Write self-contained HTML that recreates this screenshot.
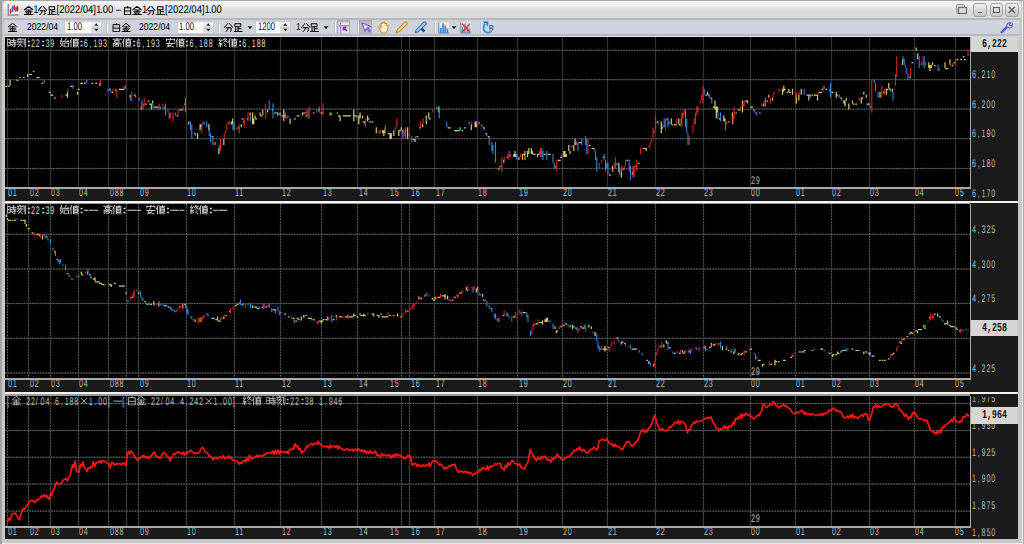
<!DOCTYPE html><html><head><meta charset="utf-8"><style>
*{margin:0;padding:0;box-sizing:border-box}
html,body{width:1024px;height:544px;overflow:hidden;background:#c9c9c9;text-rendering:geometricPrecision}
.a{position:absolute}
.k{display:inline-block;overflow:visible;stroke-width:1.15px}
.s .k{stroke-width:1.3px}
.fw{display:inline-block;width:13.2px;text-align:center}
.n{position:absolute;font:11px/12px "Liberation Sans",sans-serif;white-space:pre;color:#b8b8b8;transform:scaleX(.65);transform-origin:0 0}
.t{position:absolute;font:11px/12px "Liberation Mono",monospace;white-space:pre;transform:scaleX(.7273);transform-origin:0 0;color:#b4b4b4}
.s{position:absolute;font:11px/11px "Liberation Sans",sans-serif;white-space:pre;color:#1a1a1a}
svg.f{position:absolute;left:0;top:0}
</style></head><body>
<svg width="0" height="0" style="position:absolute"><defs><symbol id="kin" viewBox="0 0 12 12" preserveAspectRatio="none"><path d="M6 .5L.5 5M6 .5L11.5 5M3 5.2H9M2 7.8H10M6 5.2V11.2M.5 11.3H11.5M3.3 8.8L4.3 10.6M8.7 8.8L7.7 10.6" fill="none" stroke="currentColor" stroke-linecap="square"/></symbol><symbol id="fun" viewBox="0 0 12 12" preserveAspectRatio="none"><path d="M4.8 .8L.5 6M7.2 .8L11.5 6M2.8 6.3H9.3V10.5L8 11.5M5.8 6.3Q5.5 10 2.5 11.6" fill="none" stroke="currentColor" stroke-linecap="square"/></symbol><symbol id="soku" viewBox="0 0 12 12" preserveAspectRatio="none"><path d="M2.5 1H9.5V5H2.5ZM6 5V10.8M6 7.6H10M3 6.5V10.5M.8 11.5Q5 10.5 11.5 11.5" fill="none" stroke="currentColor" stroke-linecap="square"/></symbol><symbol id="haku" viewBox="0 0 12 12" preserveAspectRatio="none"><path d="M6.5 0L5.5 2M2 2.2H10V11.5H2ZM2 6.8H10" fill="none" stroke="currentColor" stroke-linecap="square"/></symbol><symbol id="ji" viewBox="0 0 12 12" preserveAspectRatio="none"><path d="M.8 2H4V10H.8ZM.8 6H4M5.2 3H11.3M8.3 .5V5.2M5 5.5H11.8M5 8H11.8M9.8 5.5V11.6H8.6M6.2 9L7.2 10.3" fill="none" stroke="currentColor" stroke-linecap="square"/></symbol><symbol id="koku" viewBox="0 0 12 12" preserveAspectRatio="none"><path d="M4.5 0V1.3M.5 1.5H8.5M2.5 1.5L.8 5H6.5M5.5 3L1 8.5M7 5L1.8 11.5M4 8.5L7.5 11.5M9.3 1.5V8.8M11.2 .3V11.6H10" fill="none" stroke="currentColor" stroke-linecap="square"/></symbol><symbol id="shi" viewBox="0 0 12 12" preserveAspectRatio="none"><path d="M2.3 .5L1 7.5M.3 4H4.8Q4 9 .5 11.5M1.5 7L4.5 10M8.2 .5L6 4.5H11.3M10.2 2.8L11.3 4.5M6.3 6.5H11V11.3H6.3Z" fill="none" stroke="currentColor" stroke-linecap="square"/></symbol><symbol id="chi" viewBox="0 0 12 12" preserveAspectRatio="none"><path d="M3 .3L.5 5.5M2 3.5V11.7M5 2.2H11.8M8.3 0V2.2M6.3 3.5H10.5V9.5H6.3ZM6.3 5.5H10.5M6.3 7.5H10.5M5 2.2V11.5H11.8" fill="none" stroke="currentColor" stroke-linecap="square"/></symbol><symbol id="kou" viewBox="0 0 12 12" preserveAspectRatio="none"><path d="M6 0V1.3M.5 1.5H11.5M3.5 3H8.5V5.3H3.5ZM1.2 6.8H10.8V11.7M1.2 6.8V11.7M4 8.2H8V10.5H4Z" fill="none" stroke="currentColor" stroke-linecap="square"/></symbol><symbol id="an" viewBox="0 0 12 12" preserveAspectRatio="none"><path d="M6 0V1.5M1 1.7H11M1 1.7V3.8M11 1.7V3.8M.5 7H11.5M5.5 3.5Q4 8 2.5 9.5Q7 10 10.5 11.7M8.3 7Q7 10.5 1.5 11.7" fill="none" stroke="currentColor" stroke-linecap="square"/></symbol><symbol id="times" viewBox="0 0 12 12" preserveAspectRatio="none"><path d="M2.5 3L9.5 10M9.5 3L2.5 10" fill="none" stroke="currentColor" stroke-linecap="square"/></symbol><symbol id="minus" viewBox="0 0 12 12" preserveAspectRatio="none"><path d="M1 6.5H11" fill="none" stroke="currentColor" stroke-linecap="square"/></symbol><symbol id="shu" viewBox="0 0 12 12" preserveAspectRatio="none"><path d="M3 0L.8 3.5L3.8 3.7M4.3 2.3L1 7H4.8M2.8 7V11.7M1.2 8.5L.5 10.5M4.2 8.5L5 10M8 0L6 3.2M7.2 1.5H10.8L6.8 5.8M8.2 3L11.8 5.8M8.2 7.3L9.5 8.3M7.7 9.5L10 11" fill="none" stroke="currentColor" stroke-linecap="square"/></symbol><symbol id="dash" viewBox="0 0 12 12" preserveAspectRatio="none"><path d="M0 6.2h12v1.1h-12z" fill="currentColor"/></symbol><symbol id="colon" viewBox="0 0 12 12" preserveAspectRatio="none"><path d="M3.6 3.4h4.8v1.9h-4.8zM3.6 8.7h4.8v1.9h-4.8z" fill="currentColor"/></symbol></defs></svg>
<div class="a" style="left:0;top:0;width:1024px;height:544px;background:#c8c8c8"></div>
<div class="a" style="left:0;top:0;width:2px;height:544px;background:#a2a2a2"></div>
<div class="a" style="left:1022px;top:0;width:1px;height:544px;background:#ececec"></div>
<div class="a" style="left:1023px;top:0;width:1px;height:544px;background:#b4a9a9"></div>
<div class="a" style="left:0;top:0;width:1024px;height:1px;background:#a8a8a8"></div>
<div class="a" style="left:2px;top:542.5px;width:1020px;height:1.5px;background:#ececec"></div>
<div class="a" style="left:3px;top:1px;width:1018px;height:17px;border-radius:5px 5px 0 0;background:linear-gradient(#f4f4f4,#ececec 33%,#dedede 50%,#d9d9d9)"></div>
<div class="a" style="left:3px;top:18px;width:1018px;height:1.5px;background:#b9b9b9"></div>
<div class="a" style="left:4px;top:19.5px;width:1015px;height:15px;background:#cfd3db"></div>
<div class="a" style="left:4px;top:34px;width:1015px;height:2px;background:#b5b9c1"></div>
<div class="a" style="left:4px;top:36px;width:1015px;height:1px;background:#e6e6e6"></div>
<svg class="f" style="left:7px;top:3px" width="13" height="13" viewBox="0 0 13 13"><rect x="1.5" y="1" width="10.5" height="10.8" fill="#f2f2f2"/><path d="M1.3 1V12H11.7" stroke="#8c8c8c" stroke-width="1.3" fill="none"/><ellipse cx="3.6" cy="8.2" rx="1" ry="2.7" fill="#e8202c"/><ellipse cx="5.6" cy="6" rx="1" ry="3.3" fill="#2080e8"/><ellipse cx="7.3" cy="4.7" rx="1" ry="2.9" fill="#e8202c"/><ellipse cx="8.7" cy="6.5" rx="0.9" ry="2.5" fill="#2080e8"/><ellipse cx="10.3" cy="5.8" rx="1.2" ry="3" fill="#f01820"/></svg><div class="s" style="left:23.5px;top:4.5px;color:#000;transform:scaleX(.86);transform-origin:0 0"><svg class="k" style="width:10.9px;height:9px;vertical-align:top;margin-top:1px"><use href="#kin"/></svg><span style="letter-spacing:-1.0px">1</span><svg class="k" style="width:10.9px;height:9px;vertical-align:top;margin-top:1px"><use href="#fun"/></svg><svg class="k" style="width:10.9px;height:9px;vertical-align:top;margin-top:1px"><use href="#soku"/></svg>[2022/04]<span style="letter-spacing:-1.0px">1</span><span style="letter-spacing:-0.4px">.</span>00 <span style="letter-spacing:-0.6px">–</span> <svg class="k" style="width:10.9px;height:9px;vertical-align:top;margin-top:1px"><use href="#haku"/></svg><svg class="k" style="width:10.9px;height:9px;vertical-align:top;margin-top:1px"><use href="#kin"/></svg><span style="letter-spacing:-1.0px">1</span><svg class="k" style="width:10.9px;height:9px;vertical-align:top;margin-top:1px"><use href="#fun"/></svg><svg class="k" style="width:10.9px;height:9px;vertical-align:top;margin-top:1px"><use href="#soku"/></svg>[2022/04]<span style="letter-spacing:-1.0px">1</span><span style="letter-spacing:-0.4px">.</span>00</div><svg class="f" style="left:955px;top:3px" width="14" height="14" viewBox="0 0 14 14"><rect x="1.5" y="1.5" width="8" height="9" rx="1" fill="#d8d8d8" stroke="#9a9a9a"/><rect x="3.5" y="4.5" width="8" height="6" fill="#dcdcdc" stroke="#707070" stroke-width="1.3"/></svg><div class="a" style="left:973px;top:3px;width:13.5px;height:13.5px;border:1px solid #a4a4a4;border-radius:3px;background:linear-gradient(#f2f2f2,#d9d9d9 50%,#c6c6c6)"></div><div class="a" style="left:977.5px;top:11.5px;width:4.5px;height:1.6px;background:#606060"></div><div class="a" style="left:989.5px;top:3px;width:13.5px;height:13.5px;border:1px solid #a4a4a4;border-radius:3px;background:linear-gradient(#f2f2f2,#d9d9d9 50%,#c6c6c6)"></div><div class="a" style="left:993.0px;top:6.5px;width:6.5px;height:6.5px;border:1.4px solid #5c5c5c"></div><div class="a" style="left:1005px;top:3px;width:13.5px;height:13.5px;border:1px solid #a4a4a4;border-radius:3px;background:linear-gradient(#f2f2f2,#d9d9d9 50%,#c6c6c6)"></div><svg class="f" style="left:1005px;top:3px" width="14" height="14" viewBox="0 0 14 14"><path d="M3.8 3.8L10 10M10 3.8L3.8 10" stroke="#5c5c5c" stroke-width="1.4"/></svg><div class="s" style="left:8.3px;top:22.5px;font-size:10px;line-height:10px;color:#000;transform:scaleX(.86);transform-origin:0 0"><svg class="k" style="width:10.7px;height:9px;vertical-align:top;margin-top:0px"><use href="#kin"/></svg></div><div class="s" style="left:27px;top:22.5px;font-size:10px;line-height:10px;color:#000;transform:scaleX(.86);transform-origin:0 0">2022/04</div><div class="a" style="left:64.3px;top:20.5px;width:37.8px;height:13.5px;background:#fff;border:1px solid #c9ccd2"></div><div class="s" style="left:66.6px;top:22px;font-size:11px;line-height:11px;color:#111;transform:scaleX(.70);transform-origin:0 0">1.00</div><div class="a" style="left:90.6px;top:21.8px;width:10.5px;height:11px;background:linear-gradient(#f2f2f2,#e0e0e0 48%,#cfd0d2 50%,#e6e6e6)"></div><svg class="f" style="left:90.6px;top:21.8px" width="11" height="11" viewBox="0 0 11 11"><path d="M3.3 3.8L5.25 1.3L7.2 3.8ZM3.3 6.8L5.25 9.3L7.2 6.8Z" fill="#1e1e1e"/></svg><div class="a" style="left:105.5px;top:22px;width:1px;height:11px;background:#b8bcc4"></div><div class="a" style="left:106.5px;top:22px;width:1px;height:11px;background:#f4f6f8"></div><div class="s" style="left:112px;top:22.5px;font-size:10px;line-height:10px;color:#000;transform:scaleX(.86);transform-origin:0 0"><svg class="k" style="width:10.7px;height:9px;vertical-align:top;margin-top:0px"><use href="#haku"/></svg><svg class="k" style="width:10.7px;height:9px;vertical-align:top;margin-top:0px"><use href="#kin"/></svg></div><div class="s" style="left:139px;top:22.5px;font-size:10px;line-height:10px;color:#000;transform:scaleX(.86);transform-origin:0 0">2022/04</div><div class="a" style="left:176.5px;top:20.5px;width:37.5px;height:13.5px;background:#fff;border:1px solid #c9ccd2"></div><div class="s" style="left:178.8px;top:22px;font-size:11px;line-height:11px;color:#111;transform:scaleX(.70);transform-origin:0 0">1.00</div><div class="a" style="left:202.5px;top:21.8px;width:10.5px;height:11px;background:linear-gradient(#f2f2f2,#e0e0e0 48%,#cfd0d2 50%,#e6e6e6)"></div><svg class="f" style="left:202.5px;top:21.8px" width="11" height="11" viewBox="0 0 11 11"><path d="M3.3 3.8L5.25 1.3L7.2 3.8ZM3.3 6.8L5.25 9.3L7.2 6.8Z" fill="#1e1e1e"/></svg><div class="a" style="left:217.8px;top:22px;width:1px;height:11px;background:#b8bcc4"></div><div class="a" style="left:218.8px;top:22px;width:1px;height:11px;background:#f4f6f8"></div><div class="s" style="left:224px;top:22.5px;font-size:10px;line-height:10px;color:#000;transform:scaleX(.86);transform-origin:0 0"><svg class="k" style="width:10.7px;height:9px;vertical-align:top;margin-top:0px"><use href="#fun"/></svg><svg class="k" style="width:10.7px;height:9px;vertical-align:top;margin-top:0px"><use href="#soku"/></svg></div><svg class="f" style="left:247px;top:25px" width="6" height="5" viewBox="0 0 6 5"><path d="M.5 1.2H5.5L3 4Z" fill="#1a1a1a"/></svg><div class="a" style="left:255.4px;top:20.5px;width:35.599999999999994px;height:13.5px;background:#fff;border:1px solid #c9ccd2"></div><div class="s" style="left:257.7px;top:22px;font-size:11px;line-height:11px;color:#111;transform:scaleX(.70);transform-origin:0 0">1200</div><div class="a" style="left:279.5px;top:21.8px;width:10.5px;height:11px;background:linear-gradient(#f2f2f2,#e0e0e0 48%,#cfd0d2 50%,#e6e6e6)"></div><svg class="f" style="left:279.5px;top:21.8px" width="11" height="11" viewBox="0 0 11 11"><path d="M3.3 3.8L5.25 1.3L7.2 3.8ZM3.3 6.8L5.25 9.3L7.2 6.8Z" fill="#1e1e1e"/></svg><div class="s" style="left:296px;top:22.5px;font-size:10px;line-height:10px;color:#000;transform:scaleX(.86);transform-origin:0 0">1<svg class="k" style="width:10.7px;height:9px;vertical-align:top;margin-top:0px"><use href="#fun"/></svg><svg class="k" style="width:10.7px;height:9px;vertical-align:top;margin-top:0px"><use href="#soku"/></svg></div><svg class="f" style="left:323px;top:25px" width="6" height="5" viewBox="0 0 6 5"><path d="M.5 1.2H5.5L3 4Z" fill="#1a1a1a"/></svg><div class="a" style="left:334.0px;top:22px;width:1px;height:11px;background:#b8bcc4"></div><div class="a" style="left:335.0px;top:22px;width:1px;height:11px;background:#f4f6f8"></div><div class="a" style="left:336.5px;top:20px;width:13.5px;height:14px;background:#b9bdc3;border:1px solid #a9adb3"></div><svg class="f" style="left:337px;top:20.5px" width="13" height="13" viewBox="0 0 13 13"><rect x="1.5" y="1.5" width="10.5" height="11" fill="#e9e8e0"/><path d="M1.5 4.7H12M3.6 1.5V12.5" stroke="#7a7ad8" stroke-width="1.1"/><path d="M6.3 6.3L10 10M6.3 6.3V9.5M6.3 6.3H9.5" stroke="#8a2ad0" stroke-width="1.5" fill="none"/></svg><div class="a" style="left:356.9px;top:22px;width:1px;height:11px;background:#b8bcc4"></div><div class="a" style="left:357.9px;top:22px;width:1px;height:11px;background:#f4f6f8"></div><div class="a" style="left:359.3px;top:20px;width:13px;height:14px;background:#b9bdc3;border:1px solid #a9adb3"></div><svg class="f" style="left:360px;top:21px" width="12" height="12" viewBox="0 0 12 12"><path d="M1.8 1.8L10.3 5.3L7.3 6.6L10.2 9.6L9.2 10.5L6.2 7.6L5 10.6Z" fill="#e8e6f6" stroke="#7d62d0" stroke-width="1.2" stroke-linejoin="round"/></svg><svg class="f" style="left:377px;top:20.5px" width="13" height="13" viewBox="0 0 13 13"><path d="M2.5 7.5Q1.2 6 2.3 5.2Q3.2 4.8 4 6V2.8Q4 1.8 5 1.9Q5.8 2 5.8 3V2.2Q6 1.3 6.9 1.4Q7.7 1.6 7.7 2.5V3Q8 2.2 8.8 2.4Q9.6 2.6 9.6 3.5V5Q10 4.2 10.8 4.6Q11.4 5 11.2 6L10.4 9.5Q9.8 12 7.6 12.2H6.2Q4.6 12.1 3.8 10.5Z" fill="#fbecd0" stroke="#d8902a" stroke-width="1.1"/></svg><svg class="f" style="left:395px;top:21px" width="14" height="13" viewBox="0 0 14 13"><path d="M1.3 11.6L2.3 8.6L9.8 1.2Q10.8 .5 11.8 1.4Q12.6 2.4 11.9 3.4L4.4 10.7Z" fill="#f8d890" stroke="#d08c28" stroke-width="1.1" stroke-linejoin="round"/><path d="M1.3 11.6L2.6 11.2L1.8 10.3Z" fill="#7a5020"/></svg><svg class="f" style="left:413.5px;top:21px" width="14" height="13" viewBox="0 0 14 13"><path d="M1.3 11.6L2.3 8.6L9.8 1.2Q10.8 .5 11.8 1.4Q12.6 2.4 11.9 3.4L4.4 10.7Z" fill="#a8c8f4" stroke="#3a74d0" stroke-width="1.1" stroke-linejoin="round"/><path d="M6.5 8.5L8.5 6.5L11.5 9.5L9.5 11.5Z" fill="#2a4f9a"/></svg><div class="a" style="left:434.0px;top:22px;width:1px;height:11px;background:#b8bcc4"></div><div class="a" style="left:435.0px;top:22px;width:1px;height:11px;background:#f4f6f8"></div><svg class="f" style="left:438px;top:21.5px" width="12" height="12" viewBox="0 0 12 12"><rect x="0.5" y="0.5" width="10.5" height="10.5" fill="#e6e8ea"/><path d="M.8 .5V11H11" stroke="#7c7c7c" stroke-width="1" fill="none"/><path d="M2.7 11V6M5 11V1.5M7.2 11V3.5M9.4 11V6.5" stroke="#2e8ae8" stroke-width="1.6"/></svg><svg class="f" style="left:450.5px;top:25px" width="6" height="5" viewBox="0 0 6 5"><path d="M.5 1.2H5.5L3 4Z" fill="#1a1a1a"/></svg><svg class="f" style="left:459.5px;top:21.5px" width="12" height="12" viewBox="0 0 12 12"><rect x="0.5" y="0.5" width="10.5" height="10.5" fill="#e6e8ea"/><path d="M.8 .5V11H11" stroke="#7c7c7c" stroke-width="1" fill="none"/><path d="M2.5 11V5M5 11V1.5M7.5 11V3.5M9.5 11V6" stroke="#3a90e8" stroke-width="1.4"/><path d="M2 1.8L10 10.2M10 1.8L2 10.2" stroke="#e83838" stroke-width="1.5"/></svg><div class="a" style="left:479.5px;top:22px;width:1px;height:11px;background:#b8bcc4"></div><div class="a" style="left:480.5px;top:22px;width:1px;height:11px;background:#f4f6f8"></div><svg class="f" style="left:482px;top:20.5px" width="13" height="13" viewBox="0 0 13 13"><path d="M3.2 2.6Q1.2 4.3 1.4 7Q1.8 11 5.6 11.6Q8 11.8 9.6 10" stroke="#2e8ee0" stroke-width="1.8" fill="none"/><path d="M1.6 1.2H5.4V4.8" stroke="#1f6ef0" stroke-width="1.6" fill="none"/><path d="M7.8 9.3V4.6H9.8Q11 4.7 11 5.9Q11 7 9.8 7.1H8.2M9.6 7.2L11.2 9.3" stroke="#2a7ee0" stroke-width="1.2" fill="none"/></svg><svg class="f" style="left:1000px;top:20.5px" width="14" height="13" viewBox="0 0 14 13"><path d="M1.8 11.2L7 6" stroke="#5a5ae8" stroke-width="2.6" stroke-linecap="round"/><path d="M7.3 6.3Q6 4 7.8 2.4Q9.3 1.2 11 1.8L9.3 3.6L10.1 4.9L11.7 4.2L12.3 3Q12.9 4.8 11.6 6.1Q10 7.5 7.9 6.6" fill="#c8c4f0" stroke="#6a62e0" stroke-width="1.1"/></svg>
<div class="a" style="left:5px;top:37px;width:966px;height:150px;background:#000"></div>
<div class="a" style="left:971px;top:37px;width:47px;height:164px;background:#1a1a1a"></div>
<div class="a" style="left:5px;top:187px;width:966px;height:2px;background:#a9a9a9"></div>
<div class="a" style="left:970px;top:37px;width:1px;height:150px;background:#a9a9a9"></div>
<div class="a" style="left:5px;top:189px;width:966px;height:12px;background:#1a1a1a"></div>
<div class="a" style="left:5px;top:204px;width:966px;height:174px;background:#000"></div>
<div class="a" style="left:971px;top:204px;width:47px;height:188px;background:#1a1a1a"></div>
<div class="a" style="left:5px;top:378px;width:966px;height:2px;background:#a9a9a9"></div>
<div class="a" style="left:970px;top:204px;width:1px;height:174px;background:#a9a9a9"></div>
<div class="a" style="left:5px;top:380px;width:966px;height:12px;background:#1a1a1a"></div>
<div class="a" style="left:5px;top:396px;width:966px;height:130px;background:#000"></div>
<div class="a" style="left:971px;top:396px;width:47px;height:143px;background:#1a1a1a"></div>
<div class="a" style="left:5px;top:526px;width:966px;height:2px;background:#a9a9a9"></div>
<div class="a" style="left:970px;top:396px;width:1px;height:130px;background:#a9a9a9"></div>
<div class="a" style="left:5px;top:528px;width:966px;height:11px;background:#1a1a1a"></div>
<div class="a" style="left:5px;top:201px;width:1013px;height:2px;background:#f4f4f4"></div>
<div class="a" style="left:5px;top:203px;width:965px;height:1px;background:#9a9a9a"></div>
<div class="a" style="left:970px;top:203px;width:48px;height:1px;background:#1a1a1a"></div>
<div class="a" style="left:5px;top:392px;width:1013px;height:2px;background:#f4f4f4"></div>
<div class="a" style="left:5px;top:394px;width:965px;height:2px;background:#9a9a9a"></div>
<div class="a" style="left:970px;top:394px;width:48px;height:2px;background:#1a1a1a"></div>
<svg class="f" width="1024" height="544" viewBox="0 0 1024 544"><path d="M7.5 37V187M28.5 37V187M50.5 37V187M78.5 37V187M108.5 37V187M126.5 37V187M138.5 37V187M186.5 37V187M234.5 37V187M280.5 37V187M321.5 37V187M357.5 37V187M401.5 37V187M409.5 37V187M434.5 37V187M477.5 37V187M517.5 37V187M562.5 37V187M607.5 37V187M655.5 37V187M703.5 37V187M750.5 37V187M795.5 37V187M831.5 37V187M869.5 37V187M914.5 37V187M955.5 37V187" stroke="#333333" stroke-width="1.25" fill="none"/><path d="M5 50.3H970M5 79.7H970M5 109.1H970M5 138.7H970M5 168.4H970" stroke="#2c2c2c" stroke-width="1" fill="none"/><path d="M5 50.3H970M5 79.7H970M5 109.1H970M5 138.7H970M5 168.4H970" stroke="#727272" stroke-width="1" stroke-dasharray="1.3 1.4" fill="none"/><path d="M7.5 204V378M28.5 204V378M50.5 204V378M78.5 204V378M108.5 204V378M126.5 204V378M138.5 204V378M186.5 204V378M234.5 204V378M280.5 204V378M321.5 204V378M357.5 204V378M401.5 204V378M409.5 204V378M434.5 204V378M477.5 204V378M517.5 204V378M562.5 204V378M607.5 204V378M655.5 204V378M703.5 204V378M750.5 204V378M795.5 204V378M831.5 204V378M869.5 204V378M914.5 204V378M955.5 204V378" stroke="#1e1e1e" stroke-width="1.2" fill="none"/><path d="M7.5 204V378M28.5 204V378M50.5 204V378M78.5 204V378M108.5 204V378M126.5 204V378M138.5 204V378M186.5 204V378M234.5 204V378M280.5 204V378M321.5 204V378M357.5 204V378M401.5 204V378M409.5 204V378M434.5 204V378M477.5 204V378M517.5 204V378M562.5 204V378M607.5 204V378M655.5 204V378M703.5 204V378M750.5 204V378M795.5 204V378M831.5 204V378M869.5 204V378M914.5 204V378M955.5 204V378" stroke="#5c5c5c" stroke-width="1.2" stroke-dasharray="1.4 1.5" fill="none"/><path d="M5 234.3H970M5 269H970M5 303.6H970M5 338.3H970M5 373H970" stroke="#2c2c2c" stroke-width="1" fill="none"/><path d="M5 234.3H970M5 269H970M5 303.6H970M5 338.3H970M5 373H970" stroke="#727272" stroke-width="1" stroke-dasharray="1.3 1.4" fill="none"/><path d="M7.5 396V526M28.5 396V526M50.5 396V526M78.5 396V526M108.5 396V526M126.5 396V526M138.5 396V526M186.5 396V526M234.5 396V526M280.5 396V526M321.5 396V526M357.5 396V526M401.5 396V526M409.5 396V526M434.5 396V526M477.5 396V526M517.5 396V526M562.5 396V526M607.5 396V526M655.5 396V526M703.5 396V526M750.5 396V526M795.5 396V526M831.5 396V526M869.5 396V526M914.5 396V526M955.5 396V526" stroke="#1e1e1e" stroke-width="1.2" fill="none"/><path d="M7.5 396V526M28.5 396V526M50.5 396V526M78.5 396V526M108.5 396V526M126.5 396V526M138.5 396V526M186.5 396V526M234.5 396V526M280.5 396V526M321.5 396V526M357.5 396V526M401.5 396V526M409.5 396V526M434.5 396V526M477.5 396V526M517.5 396V526M562.5 396V526M607.5 396V526M655.5 396V526M703.5 396V526M750.5 396V526M795.5 396V526M831.5 396V526M869.5 396V526M914.5 396V526M955.5 396V526" stroke="#5c5c5c" stroke-width="1.2" stroke-dasharray="1.4 1.5" fill="none"/><path d="M5 403.5H970M5 430.4H970M5 457.2H970M5 484.1H970M5 511.1H970" stroke="#2c2c2c" stroke-width="1" fill="none"/><path d="M5 403.5H970M5 430.4H970M5 457.2H970M5 484.1H970M5 511.1H970" stroke="#727272" stroke-width="1" stroke-dasharray="1.3 1.4" fill="none"/></svg>
<svg class="f" width="1024" height="544" viewBox="0 0 1024 544"><path d="M5.3 86.3h1.7M7.8 86.3h1.7M10.1 79.9v5.9M16.6 80.4h1.7M19.1 77.5h1.7M22.8 77.5h1.7M27.6 74.0v3.0M29.1 74.5h1.7M30.3 74.5h1.7M32.8 71.5h1.7M36.5 77.5h1.7M37.8 77.5h1.7M41.5 83.4h1.7M49.0 92.3h1.7M50.3 95.2h1.7M51.5 95.2h1.7M54.0 98.2h1.7M65.3 95.2h1.7M67.5 91.8v5.9M70.3 86.3h1.7M71.5 86.3h1.7M77.5 91.8v3.0M77.8 89.3h1.7M80.3 83.4h1.7M81.5 83.4h1.7M84.0 83.4h1.7M91.5 83.4h1.7M95.3 83.4h1.7M100.0 82.9v3.0M109.0 89.3h1.7M111.5 92.3h1.7M119.0 89.3h1.7M120.3 89.3h1.7M121.5 89.3h1.7M122.8 89.3h1.7M130.1 94.7v3.0M134.1 95.2h1.7M141.3 106.6v3.0M145.3 104.1h1.7M147.8 101.1h1.7M149.1 104.1h1.7M151.3 103.6v5.9M152.6 100.6v3.0M154.1 107.1h1.7M155.3 107.1h1.7M156.6 107.1h1.7M176.6 115.9h1.7M179.1 110.0h1.7M180.3 110.0h1.7M181.6 110.0h1.7M184.1 104.1h1.7M188.8 121.4v3.0M194.1 133.7h1.7M197.6 133.2v5.9M200.1 124.3v5.9M201.3 124.3v3.0M208.8 124.3v5.9M211.6 136.7h1.7M218.8 148.0v5.9M223.8 139.1v5.9M231.3 121.4v3.0M232.6 118.4v5.9M237.8 127.8h1.7M241.3 124.3v3.0M241.6 118.9h1.7M242.8 121.9h1.7M246.6 118.9h1.7M250.1 112.5v3.0M252.6 112.5v11.8M253.8 118.4v5.9M255.1 115.4v3.0M255.3 118.9h1.7M260.1 112.5v3.0M260.3 115.9h1.7M262.6 109.5v5.9M267.6 109.5v3.0M271.6 110.0h1.7M274.1 113.0h1.7M275.3 113.0h1.7M277.6 112.5v3.0M280.1 112.5v3.0M281.6 115.9h1.7M283.8 109.5v11.8M284.1 115.9h1.7M290.1 118.4v5.9M294.1 118.9h1.7M296.6 115.9h1.7M297.8 115.9h1.7M302.6 112.5v3.0M302.8 113.0h1.7M304.1 113.0h1.7M305.3 115.9h1.7M312.8 113.0h1.7M317.8 110.0h1.7M320.3 113.0h1.7M321.6 113.0h1.7M330.1 112.5v3.0M336.6 113.0h1.7M337.8 115.9h1.7M340.1 115.4v5.9M342.8 115.9h1.7M344.1 115.9h1.7M345.3 115.9h1.7M346.6 115.9h1.7M347.8 115.9h1.7M349.1 115.9h1.7M353.8 109.5v11.8M354.1 115.9h1.7M355.3 115.9h1.7M358.8 115.4v8.9M360.1 112.5v5.9M362.6 115.4v3.0M362.8 121.9h1.7M365.1 121.4v3.0M367.6 115.4v5.9M367.8 118.9h1.7M369.1 121.9h1.7M371.6 121.9h1.7M376.3 127.3v5.9M382.6 130.2v3.0M383.8 130.2v5.9M385.1 127.3v5.9M387.8 133.7h1.7M390.1 133.2v5.9M391.3 133.2v5.9M393.8 130.2v5.9M398.8 130.2v5.9M399.1 130.7h1.7M401.3 127.3v3.0M402.6 130.2v3.0M407.6 127.3v11.8M412.8 139.6h1.7M415.1 139.1v3.0M416.6 136.7h1.7M419.1 127.8h1.7M422.6 124.3v3.0M426.3 115.4v8.9M428.8 112.5v5.9M429.1 118.9h1.7M438.8 106.6v5.9M447.8 127.8h1.7M449.1 127.8h1.7M454.1 130.7h1.7M455.3 130.7h1.7M456.6 130.7h1.7M457.8 130.7h1.7M460.1 127.3v3.0M461.6 130.7h1.7M464.1 127.8h1.7M471.3 124.3v5.9M475.1 121.4v5.9M476.3 121.4v5.9M482.8 127.8h1.7M485.3 133.7h1.7M487.8 136.7h1.7M497.8 169.2h1.7M500.3 166.3h1.7M503.8 159.8v3.0M506.6 157.4h1.7M513.8 153.9v3.0M515.0 151.0v5.9M516.3 153.9v3.0M518.8 156.9v3.0M522.5 153.9v5.9M522.8 154.4h1.7M525.0 151.0v8.9M527.5 151.0v5.9M528.8 148.0v5.9M531.3 148.0v5.9M532.5 151.0v3.0M532.8 154.4h1.7M534.0 154.4h1.7M537.5 153.9v3.0M537.8 154.4h1.7M540.0 151.0v3.0M544.0 154.4h1.7M547.8 154.4h1.7M549.0 154.4h1.7M557.8 160.3h1.7M559.0 160.3h1.7M560.3 157.4h1.7M563.8 151.0v5.9M565.0 151.0v5.9M566.3 153.9v3.0M568.8 145.0v5.9M570.0 151.0v3.0M573.8 145.0v5.9M575.0 139.1v5.9M576.3 142.1v3.0M579.0 142.6h1.7M580.3 142.6h1.7M589.0 145.5h1.7M591.5 148.5h1.7M592.8 148.5h1.7M602.8 157.4h1.7M609.0 175.1h1.7M612.5 165.8v5.9M618.8 162.8v8.9M621.3 168.7v8.9M622.8 169.2h1.7M626.5 160.3h1.7M632.5 171.7v3.0M635.3 166.3h1.7M637.8 163.3h1.7M642.8 148.5h1.7M644.0 148.5h1.7M646.3 148.0v3.0M656.5 121.9h1.7M661.3 121.4v11.8M661.5 127.8h1.7M666.5 118.9h1.7M671.3 118.4v5.9M671.5 124.8h1.7M674.0 124.8h1.7M675.3 124.8h1.7M678.8 118.4v5.9M679.0 124.8h1.7M681.3 118.4v5.9M705.3 95.2h1.7M707.5 91.8v3.0M707.8 95.2h1.7M710.3 98.2h1.7M712.8 107.1h1.7M715.0 100.6v8.9M716.3 106.6v11.8M717.5 106.6v5.9M719.0 118.9h1.7M723.8 115.4v5.9M725.0 118.4v3.0M727.8 121.9h1.7M732.5 112.5v11.8M735.3 113.0h1.7M737.8 110.0h1.7M739.0 110.0h1.7M742.5 100.6v11.8M745.3 101.1h1.7M747.5 100.6v3.0M750.3 107.1h1.7M751.5 107.1h1.7M752.8 110.0h1.7M755.3 113.0h1.7M759.0 113.0h1.7M763.8 103.6v3.0M766.5 101.1h1.7M768.8 94.7v3.0M772.5 97.7v3.0M782.5 88.8v5.9M783.8 85.8v5.9M784.0 89.3h1.7M786.5 92.3h1.7M788.8 88.8v3.0M789.0 92.3h1.7M792.5 88.8v5.9M796.3 94.7v8.9M798.8 94.7v5.9M801.3 88.8v5.9M806.5 95.2h1.7M808.8 94.7v5.9M809.0 95.2h1.7M811.5 95.2h1.7M814.0 95.2h1.7M815.3 95.2h1.7M817.5 94.7v5.9M819.0 92.3h1.7M820.3 92.3h1.7M821.5 89.3h1.7M825.3 89.3h1.7M830.0 88.8v3.0M831.5 92.3h1.7M836.3 91.8v5.9M836.5 95.2h1.7M840.3 98.2h1.7M843.8 100.6v3.0M845.0 100.6v5.9M846.3 97.7v3.0M848.8 103.6v5.9M852.5 100.6v3.0M852.8 104.1h1.7M855.3 104.1h1.7M861.3 97.7v5.9M861.5 98.2h1.7M863.8 91.8v3.0M866.3 94.7v3.0M866.5 104.1h1.7M867.8 104.1h1.7M870.3 107.1h1.7M880.0 91.8v5.9M882.8 92.3h1.7M886.3 88.8v5.9M886.5 89.3h1.7M888.8 82.9v5.9M889.0 89.3h1.7M892.5 88.8v3.0M902.5 59.2v5.9M909.0 77.5h1.7M911.5 62.7h1.7M916.3 47.4v3.0M917.5 53.3v5.9M928.8 62.2v5.9M930.0 65.1v5.9M931.3 65.1v3.0M932.5 62.2v3.0M934.0 65.6h1.7M945.0 62.2v5.9M945.3 68.6h1.7M946.5 68.6h1.7M950.0 59.2v5.9M951.5 65.6h1.7M954.0 62.7h1.7M956.5 59.7h1.7M960.3 59.7h1.7M962.8 56.7h1.7M964.0 59.7h1.7" stroke="#d2ca72" stroke-width="1.2" fill="none"/><path d="M44.2 79.9v3.0M73.0 85.8v3.0M86.8 79.9v3.0M108.0 88.8v3.0M110.5 88.8v3.0M115.5 88.8v3.0M125.5 85.8v3.0M130.5 97.7v3.0M135.5 94.7v3.0M139.2 97.7v3.0M141.8 100.6v8.9M153.0 103.6v5.9M158.0 106.6v3.0M160.5 106.6v3.0M164.2 106.6v3.0M165.5 103.6v11.8M168.0 109.5v3.0M169.2 112.5v5.9M175.5 112.5v3.0M185.5 97.7v14.8M190.5 121.4v8.9M191.8 124.3v14.8M195.5 133.2v3.0M204.2 121.4v3.0M206.8 121.4v5.9M209.2 124.3v11.8M210.5 133.2v8.9M213.0 136.2v8.9M215.5 142.1v3.0M219.2 145.0v5.9M229.2 121.4v3.0M233.0 124.3v5.9M234.2 121.4v8.9M250.5 115.4v5.9M269.2 100.6v8.9M273.0 103.6v14.8M278.0 112.5v3.0M285.5 112.5v5.9M288.0 115.4v3.0M308.0 109.5v8.9M319.2 106.6v5.9M331.8 112.5v3.0M356.8 115.4v3.0M379.2 130.2v3.0M403.0 130.2v8.9M405.5 127.3v11.8M411.8 136.2v5.9M426.8 118.4v3.0M436.8 106.6v3.0M439.2 109.5v8.9M446.8 121.4v5.9M460.5 127.3v3.0M469.2 121.4v3.0M476.8 121.4v3.0M479.2 121.4v3.0M481.8 124.3v3.0M484.2 127.3v3.0M486.8 133.2v3.0M489.2 136.2v8.9M491.8 142.1v8.9M493.0 145.0v8.9M495.5 142.1v20.7M509.2 151.0v5.9M516.8 153.9v5.9M541.8 148.0v8.9M543.0 151.0v8.9M546.8 151.0v8.9M553.0 153.9v8.9M554.2 162.8v5.9M555.5 165.8v3.0M578.0 142.1v8.9M581.8 139.1v5.9M585.5 136.2v8.9M586.8 139.1v14.8M594.2 148.0v3.0M595.5 151.0v8.9M596.8 156.9v14.8M604.2 153.9v5.9M605.5 159.8v11.8M606.8 162.8v5.9M608.0 162.8v11.8M616.8 162.8v3.0M619.2 165.8v8.9M629.2 159.8v11.8M630.5 165.8v14.8M658.0 121.4v3.0M664.2 118.4v8.9M668.0 118.4v8.9M669.2 121.4v3.0M685.5 109.5v17.8M686.8 118.4v14.8M688.0 133.2v11.8M704.2 88.8v5.9M709.2 94.7v3.0M711.8 97.7v5.9M718.0 112.5v5.9M720.5 112.5v8.9M725.5 121.4v8.9M754.2 109.5v3.0M756.8 112.5v3.0M765.5 97.7v8.9M804.2 88.8v5.9M810.5 94.7v3.0M824.2 85.8v3.0M830.5 82.9v14.8M839.2 94.7v3.0M841.8 97.7v3.0M869.2 103.6v3.0M874.2 79.9v3.0M875.5 82.9v8.9M878.0 91.8v5.9M890.5 88.8v3.0M893.0 91.8v8.9M903.0 56.2v5.9M904.2 59.2v5.9M905.5 65.1v3.0M906.8 68.1v5.9M908.0 74.0v5.9M918.0 53.3v3.0M919.2 56.2v11.8M921.8 62.2v3.0M924.2 56.2v11.8M938.0 65.1v5.9" stroke="#2f86dc" stroke-width="1.1" fill="none"/><path d="M61.8 94.7v3.0M68.0 88.8v3.0M100.5 79.9v3.0M113.0 88.8v3.0M116.8 88.8v8.9M124.2 85.8v3.0M131.8 91.8v8.9M143.0 103.6v5.9M144.2 97.7v8.9M159.2 103.6v5.9M163.0 103.6v5.9M170.5 112.5v5.9M173.0 112.5v8.9M178.0 109.5v5.9M183.0 106.6v3.0M201.8 124.3v8.9M203.0 121.4v3.0M214.2 142.1v3.0M220.5 139.1v11.8M224.2 133.2v5.9M225.5 130.2v3.0M226.8 124.3v5.9M228.0 121.4v3.0M236.8 127.3v3.0M239.2 124.3v8.9M244.2 118.4v8.9M248.0 112.5v8.9M263.0 109.5v5.9M265.5 103.6v14.8M286.8 115.4v3.0M306.8 109.5v5.9M309.2 106.6v11.8M316.8 109.5v3.0M323.0 103.6v11.8M365.5 118.4v8.9M380.5 130.2v3.0M385.5 124.3v8.9M395.5 127.3v3.0M396.8 118.4v8.9M404.2 130.2v5.9M409.2 133.2v3.0M415.5 136.2v3.0M420.5 121.4v5.9M423.0 118.4v5.9M433.0 109.5v3.0M471.8 121.4v3.0M478.0 121.4v3.0M499.2 165.8v3.0M501.8 156.9v14.8M504.2 156.9v3.0M508.0 153.9v5.9M510.5 153.9v3.0M519.2 156.9v3.0M520.5 153.9v3.0M525.5 151.0v8.9M540.5 148.0v8.9M556.8 159.8v11.8M561.8 153.9v3.0M571.8 145.0v3.0M576.8 142.1v3.0M588.0 139.1v14.8M599.2 162.8v5.9M601.8 159.8v3.0M613.0 168.7v3.0M614.2 162.8v5.9M615.5 156.9v11.8M621.8 165.8v5.9M624.2 165.8v3.0M625.5 159.8v5.9M633.0 165.8v11.8M634.2 165.8v11.8M636.8 159.8v11.8M640.5 148.0v5.9M649.2 145.0v3.0M650.5 142.1v3.0M651.8 139.1v3.0M653.0 127.3v11.8M654.2 130.2v3.0M655.5 115.4v14.8M663.0 124.3v3.0M665.5 118.4v11.8M676.8 118.4v5.9M681.8 112.5v14.8M683.0 112.5v5.9M684.2 109.5v5.9M689.2 136.2v8.9M693.0 124.3v8.9M694.2 118.4v5.9M695.5 112.5v11.8M696.8 106.6v8.9M698.0 106.6v5.9M700.5 100.6v3.0M701.8 94.7v5.9M703.0 85.8v17.8M726.8 121.4v3.0M733.0 115.4v8.9M734.2 106.6v11.8M740.5 106.6v3.0M743.0 103.6v3.0M744.2 100.6v5.9M761.8 103.6v3.0M764.2 100.6v3.0M770.5 97.7v5.9M773.0 94.7v3.0M774.2 91.8v3.0M779.2 88.8v3.0M796.8 91.8v5.9M799.2 91.8v5.9M818.0 91.8v3.0M823.0 85.8v5.9M859.2 97.7v3.0M871.8 79.9v32.6M881.8 85.8v11.8M884.2 88.8v5.9M895.5 74.0v11.8M896.8 56.2v20.7M910.5 68.1v8.9M923.0 56.2v8.9M925.5 62.2v3.0M939.2 68.1v3.0M953.0 62.2v3.0M955.5 59.2v5.9M968.0 50.3v5.9" stroke="#e02222" stroke-width="1.1" fill="none"/><path d="M6.3 214.2v2.8M6.5 218.9h1.7M7.8 220.3h1.7M9.1 220.3h1.7M11.6 220.3h1.7M14.1 220.3h1.7M20.3 220.3h1.7M22.8 220.3h1.7M25.1 219.8v4.2M26.3 224.0v2.8M27.8 228.7h1.7M31.6 232.9h1.7M36.5 234.3h1.7M37.8 234.3h1.7M39.0 235.7h1.7M42.5 235.2v4.2M45.3 237.1h1.7M55.0 250.6v2.8M56.5 259.5h1.7M57.8 260.9h1.7M66.5 273.5h1.7M81.3 271.6v2.8M81.5 274.9h1.7M87.5 271.6v2.8M89.0 274.9h1.7M92.8 279.1h1.7M95.0 277.2v4.2M95.3 281.9h1.7M96.5 281.9h1.7M97.8 281.9h1.7M99.0 283.3h1.7M100.3 283.3h1.7M101.5 284.7h1.7M102.8 284.7h1.7M109.0 284.7h1.7M111.3 284.2v2.8M114.0 283.3h1.7M119.0 286.1h1.7M120.3 286.1h1.7M121.5 286.1h1.7M122.8 286.1h1.7M125.3 293.1h1.7M131.6 297.3h1.7M137.8 293.1h1.7M144.1 301.5h1.7M146.6 304.3h1.7M150.3 304.3h1.7M153.8 301.0v4.2M158.8 302.4v4.2M164.1 305.7h1.7M165.3 305.7h1.7M167.8 307.1h1.7M179.1 307.1h1.7M182.6 303.8v4.2M184.1 304.3h1.7M195.1 319.2v2.8M200.1 317.8v4.2M211.6 318.3h1.7M212.8 318.3h1.7M215.3 319.7h1.7M217.6 316.4v4.2M217.8 321.1h1.7M219.1 321.1h1.7M223.8 316.4v2.8M225.3 315.5h1.7M229.1 311.3h1.7M235.3 305.7h1.7M236.6 304.3h1.7M239.1 302.9h1.7M241.6 304.3h1.7M252.6 305.2v2.8M254.1 307.1h1.7M255.3 307.1h1.7M256.6 308.5h1.7M257.8 308.5h1.7M261.6 307.1h1.7M265.3 307.1h1.7M272.8 309.9h1.7M274.1 309.9h1.7M284.1 314.1h1.7M287.8 316.9h1.7M292.8 318.3h1.7M295.3 321.1h1.7M296.6 318.3h1.7M297.8 319.7h1.7M301.3 316.4v4.2M303.8 315.0v2.8M305.3 315.5h1.7M307.8 318.3h1.7M309.1 318.3h1.7M310.3 318.3h1.7M312.8 319.7h1.7M316.6 322.5h1.7M319.1 321.1h1.7M321.3 320.6v2.8M321.6 321.1h1.7M322.8 319.7h1.7M325.3 319.7h1.7M327.6 316.4v4.2M332.8 319.7h1.7M336.3 315.0v2.8M339.1 316.9h1.7M340.3 316.9h1.7M345.3 316.9h1.7M347.6 315.0v2.8M349.1 316.9h1.7M350.3 316.9h1.7M351.6 316.9h1.7M353.8 313.6v2.8M354.1 315.5h1.7M356.6 316.9h1.7M359.1 314.1h1.7M360.3 315.5h1.7M361.6 315.5h1.7M363.8 313.6v2.8M364.1 315.5h1.7M371.6 314.1h1.7M373.8 313.6v2.8M376.6 315.5h1.7M378.8 315.0v2.8M380.3 314.1h1.7M381.6 316.9h1.7M382.8 316.9h1.7M384.1 316.9h1.7M385.3 316.9h1.7M386.6 316.9h1.7M389.1 315.5h1.7M392.8 315.5h1.7M397.6 313.6v2.8M400.3 316.9h1.7M406.6 311.3h1.7M418.8 296.8v2.8M420.3 298.7h1.7M424.1 295.9h1.7M431.6 298.7h1.7M432.8 300.1h1.7M435.1 296.8v2.8M437.8 297.3h1.7M439.1 297.3h1.7M441.6 295.9h1.7M442.8 295.9h1.7M445.1 294.0v5.6M447.6 295.4v4.2M451.6 300.1h1.7M454.1 297.3h1.7M456.6 295.9h1.7M459.1 293.1h1.7M466.3 287.0v2.8M466.6 290.3h1.7M476.3 288.4v4.2M477.6 287.0v2.8M482.6 294.0v2.8M482.8 300.1h1.7M490.3 308.5h1.7M502.8 315.5h1.7M512.8 316.9h1.7M514.0 316.9h1.7M522.8 312.7h1.7M524.0 312.7h1.7M535.3 323.9h1.7M536.5 323.9h1.7M539.0 322.5h1.7M540.3 322.5h1.7M542.5 320.6v4.2M545.0 319.2v2.8M546.3 317.8v4.2M547.5 317.8v4.2M555.0 326.2v2.8M556.3 330.4v2.8M556.5 330.9h1.7M560.3 326.7h1.7M562.8 325.3h1.7M565.3 323.9h1.7M572.5 324.8v4.2M572.8 326.7h1.7M575.3 328.1h1.7M580.3 326.7h1.7M581.5 328.1h1.7M582.8 328.1h1.7M588.8 324.8v2.8M591.3 326.2v2.8M595.0 331.8v4.2M602.8 349.1h1.7M605.0 345.8v5.6M605.3 349.1h1.7M607.8 347.7h1.7M616.5 337.9h1.7M621.3 341.6v2.8M621.5 342.1h1.7M624.0 343.5h1.7M631.5 349.1h1.7M632.8 349.1h1.7M634.0 349.1h1.7M635.3 349.1h1.7M646.5 360.3h1.7M648.8 361.2v2.8M653.8 364.0v2.8M660.3 346.3h1.7M663.8 344.4v2.8M666.3 340.2v2.8M666.5 343.5h1.7M669.0 347.7h1.7M674.0 353.3h1.7M679.0 353.3h1.7M682.5 350.0v2.8M682.8 353.3h1.7M684.0 351.9h1.7M687.8 351.9h1.7M705.0 345.8v2.8M709.0 347.7h1.7M711.3 343.0v4.2M712.8 344.9h1.7M714.0 344.9h1.7M722.5 345.8v4.2M725.3 349.1h1.7M727.8 350.5h1.7M730.3 351.9h1.7M733.8 351.4v2.8M738.8 352.8v2.8M740.3 354.7h1.7M741.5 353.3h1.7M745.3 351.9h1.7M750.3 349.1h1.7M757.8 360.3h1.7M759.0 360.3h1.7M762.5 364.0v2.8M762.8 364.5h1.7M770.3 364.5h1.7M775.0 359.8v5.6M775.3 361.7h1.7M777.8 361.7h1.7M782.8 360.3h1.7M784.0 360.3h1.7M790.3 357.5h1.7M791.5 356.1h1.7M799.0 351.9h1.7M801.5 351.9h1.7M802.8 351.9h1.7M804.0 350.5h1.7M811.5 350.5h1.7M820.3 349.1h1.7M821.5 349.1h1.7M829.0 353.3h1.7M832.5 354.2v2.8M832.8 354.7h1.7M835.3 354.7h1.7M837.5 351.4v2.8M837.8 353.3h1.7M840.3 351.9h1.7M841.5 350.5h1.7M842.8 350.5h1.7M844.0 350.5h1.7M851.5 349.1h1.7M855.3 350.5h1.7M856.5 350.5h1.7M857.8 350.5h1.7M863.8 351.4v2.8M865.3 351.9h1.7M867.8 353.3h1.7M870.0 352.8v2.8M871.5 356.1h1.7M872.8 356.1h1.7M879.0 360.3h1.7M881.5 360.3h1.7M884.0 360.3h1.7M887.8 358.9h1.7M891.5 354.7h1.7M892.8 353.3h1.7M899.0 342.1h1.7M900.3 343.5h1.7M902.8 339.3h1.7M906.5 336.5h1.7M909.0 333.7h1.7M910.3 332.3h1.7M911.5 333.7h1.7M915.3 330.9h1.7M917.5 330.4v2.8M917.8 329.5h1.7M919.0 329.5h1.7M920.3 329.5h1.7M923.8 324.8v2.8M924.0 328.1h1.7M930.0 316.4v2.8M931.5 316.9h1.7M934.0 314.1h1.7M937.5 313.6v2.8M939.0 316.9h1.7M944.0 323.9h1.7M945.3 323.9h1.7M947.5 320.6v4.2M949.0 325.3h1.7M950.3 326.7h1.7M951.5 326.7h1.7M952.8 326.7h1.7M955.3 328.1h1.7M956.5 329.5h1.7M959.0 330.9h1.7" stroke="#d2ca72" stroke-width="1.2" fill="none"/><path d="M16.8 218.4v1.4M29.2 228.2v1.4M44.2 233.8v2.8M46.8 235.2v2.8M48.0 238.0v2.8M50.5 239.4v4.2M53.0 247.8v2.8M55.5 252.0v4.2M59.2 260.4v4.2M60.5 259.0v4.2M63.0 264.6v1.4M65.5 264.6v5.6M68.0 273.0v1.4M69.2 274.4v2.8M71.8 278.6v1.4M78.0 275.8v1.4M88.0 268.8v5.6M90.5 275.8v2.8M91.8 277.2v1.4M124.2 285.6v1.4M128.0 299.6v2.8M136.8 289.8v1.4M140.5 291.2v5.6M141.8 296.8v2.8M143.0 298.2v2.8M145.5 301.0v2.8M149.2 302.4v2.8M154.2 303.8v1.4M160.5 303.8v1.4M163.0 303.8v2.8M166.8 305.2v1.4M170.5 306.6v2.8M171.8 308.0v2.8M174.2 309.4v2.8M185.5 305.2v2.8M186.8 305.2v8.4M188.0 309.4v5.6M190.5 316.4v1.4M191.8 316.4v2.8M193.0 319.2v1.4M206.8 313.6v1.4M208.0 313.6v2.8M214.2 317.8v1.4M240.5 299.6v5.6M243.0 303.8v2.8M248.0 303.8v1.4M250.5 303.8v4.2M253.0 305.2v1.4M259.2 306.6v2.8M263.0 303.8v5.6M268.0 305.2v1.4M269.2 303.8v4.2M271.8 308.0v4.2M275.5 309.4v4.2M278.0 306.6v4.2M279.2 310.8v4.2M280.5 312.2v1.4M285.5 313.6v1.4M291.8 316.4v2.8M294.2 319.2v4.2M311.8 317.8v2.8M314.2 319.2v1.4M329.2 317.8v1.4M331.8 315.0v7.0M343.0 316.4v1.4M426.8 292.6v2.8M428.0 295.4v1.4M449.2 299.6v1.4M461.8 291.2v2.8M473.0 287.0v5.6M478.0 289.8v2.8M479.2 292.6v2.8M480.5 294.0v1.4M485.5 299.6v1.4M486.8 301.0v5.6M489.2 305.2v2.8M491.8 308.0v4.2M494.2 313.6v4.2M495.5 313.6v5.6M496.8 319.2v1.4M498.0 317.8v4.2M506.8 312.2v4.2M508.0 313.6v2.8M509.2 316.4v1.4M520.5 312.2v1.4M526.8 312.2v5.6M528.0 315.0v7.0M530.5 330.4v5.6M548.0 320.6v1.4M550.5 320.6v1.4M553.0 323.4v5.6M566.8 323.4v1.4M568.0 324.8v1.4M570.5 324.8v2.8M574.2 326.2v1.4M576.8 327.6v2.8M584.2 324.8v4.2M593.0 331.8v1.4M596.8 333.2v8.4M598.0 341.6v7.0M599.2 345.8v5.6M600.5 348.6v1.4M618.0 338.8v1.4M619.2 340.2v1.4M623.0 341.6v1.4M625.5 343.0v2.8M630.5 344.4v4.2M636.8 348.6v1.4M639.2 350.0v2.8M641.8 352.8v1.4M643.0 354.2v1.4M649.2 361.2v1.4M650.5 362.6v2.8M668.0 341.6v8.4M670.5 347.2v1.4M673.0 351.4v2.8M678.0 351.4v1.4M690.5 350.0v4.2M696.8 347.2v2.8M703.0 347.2v1.4M705.5 347.2v4.2M706.8 348.6v1.4M719.2 343.0v1.4M720.5 341.6v7.0M726.8 345.8v4.2M734.2 348.6v4.2M754.2 352.8v1.4M755.5 354.2v5.6M756.8 357.0v1.4M800.5 351.4v1.4M824.2 350.0v1.4M828.0 351.4v1.4M846.8 348.6v2.8M866.8 351.4v1.4M870.5 351.4v2.8M938.0 315.0v1.4M941.8 319.2v1.4M943.0 320.6v1.4M948.0 323.4v1.4M954.2 326.2v1.4M961.8 329.0v1.4M963.0 330.4v1.4" stroke="#2f86dc" stroke-width="1.1" fill="none"/><path d="M15.5 218.4v1.4M34.2 232.4v4.2M40.5 233.8v4.2M43.0 233.8v2.8M73.0 278.6v1.4M76.8 275.8v1.4M79.2 275.8v1.4M85.5 271.6v1.4M105.5 284.2v1.4M130.5 296.8v2.8M133.0 292.6v4.2M134.2 289.8v7.0M148.0 302.4v1.4M156.8 303.8v1.4M159.2 301.0v4.2M173.0 309.4v1.4M175.5 310.8v1.4M176.8 309.4v2.8M178.0 308.0v1.4M180.5 306.6v1.4M183.0 303.8v5.6M198.0 317.8v5.6M200.5 319.2v1.4M201.8 316.4v5.6M203.0 316.4v2.8M204.2 315.0v2.8M220.5 317.8v2.8M221.8 316.4v2.8M224.2 315.0v1.4M230.5 308.0v5.6M233.0 306.6v2.8M245.5 303.8v4.2M264.2 303.8v4.2M266.8 305.2v1.4M276.8 309.4v1.4M281.8 312.2v1.4M299.2 317.8v1.4M318.0 320.6v4.2M328.0 317.8v2.8M336.8 316.4v4.2M344.2 316.4v1.4M348.0 315.0v2.8M368.0 312.2v2.8M388.0 312.2v4.2M394.2 315.0v1.4M401.8 313.6v4.2M403.0 313.6v1.4M405.5 309.4v4.2M408.0 309.4v2.8M410.5 308.0v1.4M411.8 306.6v1.4M413.0 303.8v5.6M414.2 303.8v2.8M416.8 301.0v1.4M419.2 295.4v4.2M421.8 296.8v1.4M425.5 294.0v1.4M436.8 296.8v2.8M440.5 294.0v4.2M450.5 299.6v1.4M458.0 294.0v4.2M460.5 291.2v1.4M463.0 291.2v1.4M468.0 285.6v4.2M471.8 287.0v1.4M474.2 285.6v4.2M499.2 317.8v4.2M504.2 310.8v4.2M511.8 316.4v5.6M515.5 312.2v4.2M518.0 313.6v1.4M519.2 309.4v4.2M521.8 310.8v5.6M531.8 330.4v4.2M533.0 323.4v7.0M534.2 323.4v2.8M538.0 319.2v4.2M549.2 320.6v1.4M559.2 326.2v2.8M561.8 324.8v2.8M564.2 323.4v1.4M569.2 324.8v2.8M578.0 329.0v4.2M579.2 327.6v2.8M585.5 324.8v7.0M601.8 345.8v4.2M609.2 347.2v4.2M610.5 345.8v1.4M611.8 341.6v4.2M614.2 340.2v4.2M628.0 345.8v1.4M654.2 361.2v5.6M655.5 352.8v8.4M656.8 351.4v4.2M658.0 347.2v4.2M659.2 345.8v1.4M661.8 341.6v7.0M676.8 351.4v1.4M680.5 350.0v2.8M685.5 350.0v2.8M689.2 348.6v4.2M691.8 348.6v2.8M695.5 347.2v1.4M699.2 347.2v4.2M711.8 344.4v1.4M715.5 343.0v1.4M718.0 343.0v2.8M731.8 348.6v2.8M735.5 348.6v4.2M744.2 350.0v5.6M749.2 348.6v1.4M769.2 361.2v4.2M771.8 362.6v1.4M793.0 354.2v2.8M794.2 352.8v1.4M814.2 348.6v1.4M845.5 348.6v1.4M848.0 348.6v1.4M890.5 354.2v2.8M896.8 347.2v4.2M898.0 345.8v1.4M901.8 337.4v5.6M904.2 337.4v2.8M913.0 331.8v1.4M925.5 324.8v2.8M928.0 320.6v1.4M930.5 313.6v7.0M933.0 313.6v5.6M960.5 329.0v4.2M965.5 329.0v1.4M968.0 329.0v1.4" stroke="#e02222" stroke-width="1.1" fill="none"/><path d="M6.3,521.4 L7.6,521.6 L8.9,518.1 L10.2,520.0 L11.5,514.9 L12.8,513.5 L14.1,513.5 L15.4,513.0 L16.7,515.8 L18.0,517.9 L19.3,519.9 L20.6,515.6 L21.9,511.6 L23.2,508.6 L24.5,509.1 L25.8,507.4 L27.1,505.3 L28.4,503.4 L29.7,501.3 L31.0,500.7 L32.3,500.4 L33.6,501.4 L34.9,502.6 L36.2,500.0 L37.5,500.5 L38.8,498.7 L40.1,498.2 L41.4,496.0 L42.7,497.0 L44.0,494.6 L45.3,496.9 L46.6,495.1 L47.9,497.9 L49.2,499.3 L50.5,493.2 L51.8,495.5 L53.1,490.7 L54.4,487.9 L55.7,483.8 L57.0,482.3 L58.3,484.2 L59.6,484.0 L60.9,483.6 L62.2,481.8 L63.5,479.9 L64.8,479.3 L66.1,478.3 L67.4,481.0 L68.7,477.6 L70.0,475.6 L71.3,469.8 L72.6,464.6 L73.9,467.4 L75.2,461.2 L76.5,471.1 L77.8,472.1 L79.1,472.2 L80.4,464.4 L81.7,466.6 L83.0,461.9 L84.3,467.3 L85.6,468.8 L86.9,471.7 L88.2,467.8 L89.5,468.7 L90.8,466.8 L92.1,467.1 L93.4,461.5 L94.7,466.7 L96.0,462.9 L97.3,462.3 L98.6,462.4 L99.9,460.7 L101.2,463.1 L102.5,460.7 L103.8,461.4 L105.1,461.1 L106.4,462.4 L107.7,463.4 L109.0,463.9 L110.3,467.7 L111.6,462.3 L112.9,462.7 L114.2,465.4 L115.5,463.7 L116.8,464.5 L118.1,463.3 L119.4,463.9 L120.7,464.1 L122.0,464.6 L123.3,463.0 L124.6,463.8 L125.9,465.6 L127.2,455.0 L128.5,451.4 L129.8,454.3 L131.1,450.9 L132.4,452.7 L133.7,454.2 L135.0,458.0 L136.3,458.3 L137.6,460.7 L138.9,458.5 L140.2,457.7 L141.5,457.4 L142.8,455.6 L144.1,455.7 L145.4,457.9 L146.7,456.6 L148.0,458.2 L149.3,458.1 L150.6,456.2 L151.9,455.1 L153.2,453.2 L154.5,452.2 L155.8,455.6 L157.1,456.7 L158.4,457.0 L159.7,458.4 L161.0,457.0 L162.3,454.3 L163.6,452.4 L164.9,453.7 L166.2,454.7 L167.5,456.9 L168.8,457.1 L170.1,460.9 L171.4,457.9 L172.7,455.9 L174.0,453.5 L175.3,454.5 L176.6,453.2 L177.9,451.7 L179.2,452.9 L180.5,452.6 L181.8,454.2 L183.1,452.3 L184.4,455.2 L185.7,452.5 L187.0,454.1 L188.3,451.6 L189.6,451.5 L190.9,450.2 L192.2,452.0 L193.5,452.2 L194.8,453.6 L196.1,453.2 L197.4,453.1 L198.7,453.0 L200.0,451.3 L201.3,448.6 L202.6,447.4 L203.9,449.0 L205.2,451.8 L206.5,452.6 L207.8,453.2 L209.1,456.2 L210.4,455.9 L211.7,457.6 L213.0,460.0 L214.3,458.7 L215.6,457.5 L216.9,458.5 L218.2,458.1 L219.5,456.9 L220.8,457.7 L222.1,458.0 L223.4,455.6 L224.7,458.7 L226.0,457.7 L227.3,457.9 L228.6,456.0 L229.9,458.5 L231.2,457.0 L232.5,460.2 L233.8,460.0 L235.1,460.9 L236.4,460.7 L237.7,462.2 L239.0,464.1 L240.3,462.3 L241.6,463.6 L242.9,461.5 L244.2,460.2 L245.5,461.8 L246.8,457.7 L248.1,461.0 L249.4,455.3 L250.7,457.4 L252.0,459.2 L253.3,457.8 L254.6,457.2 L255.9,457.4 L257.2,455.1 L258.5,456.9 L259.8,455.3 L261.1,456.2 L262.4,456.1 L263.7,454.6 L265.0,454.9 L266.3,453.0 L267.6,453.4 L268.9,453.0 L270.2,452.2 L271.5,453.7 L272.8,450.8 L274.1,454.5 L275.4,450.0 L276.7,453.8 L278.0,450.1 L279.3,453.9 L280.6,450.6 L281.9,452.1 L283.2,452.1 L284.5,451.9 L285.8,452.8 L287.1,451.5 L288.4,453.8 L289.7,449.3 L291.0,449.8 L292.3,448.4 L293.6,449.3 L294.9,443.7 L296.2,446.5 L297.5,445.8 L298.8,449.7 L300.1,448.6 L301.4,453.0 L302.7,451.6 L304.0,451.0 L305.3,449.5 L306.6,446.0 L307.9,446.8 L309.2,445.2 L310.5,444.0 L311.8,443.7 L313.1,445.2 L314.4,443.4 L315.7,443.3 L317.0,444.1 L318.3,441.2 L319.6,444.5 L320.9,444.1 L322.2,446.2 L323.5,446.7 L324.8,446.3 L326.1,446.6 L327.4,446.4 L328.7,448.1 L330.0,445.2 L331.3,447.8 L332.6,446.2 L333.9,446.0 L335.2,447.3 L336.5,445.6 L337.8,448.9 L339.1,446.2 L340.4,448.3 L341.7,448.7 L343.0,449.6 L344.3,449.6 L345.6,449.9 L346.9,449.0 L348.2,449.0 L349.5,450.8 L350.8,449.9 L352.1,449.1 L353.4,451.3 L354.7,449.6 L356.0,449.3 L357.3,450.7 L358.6,448.7 L359.9,450.5 L361.2,451.4 L362.5,449.6 L363.8,452.4 L365.1,450.3 L366.4,453.7 L367.7,451.2 L369.0,453.3 L370.3,450.7 L371.6,453.0 L372.9,453.2 L374.2,452.6 L375.5,451.1 L376.8,455.6 L378.1,454.9 L379.4,455.4 L380.7,457.5 L382.0,453.6 L383.3,455.3 L384.6,454.8 L385.9,455.2 L387.2,455.9 L388.5,454.5 L389.8,455.6 L391.1,458.2 L392.4,455.1 L393.7,456.7 L395.0,453.8 L396.3,456.2 L397.6,453.9 L398.9,455.3 L400.2,455.4 L401.5,456.6 L402.8,457.0 L404.1,458.7 L405.4,458.4 L406.7,457.5 L408.0,455.2 L409.3,456.6 L410.6,456.1 L411.9,464.9 L413.2,464.6 L414.5,463.3 L415.8,463.6 L417.1,466.7 L418.4,464.2 L419.7,466.2 L421.0,465.4 L422.3,466.6 L423.6,464.8 L424.9,466.4 L426.2,465.0 L427.5,465.7 L428.8,462.9 L430.1,466.7 L431.4,463.1 L432.7,460.9 L434.0,460.9 L435.3,460.3 L436.6,462.0 L437.9,462.3 L439.2,465.1 L440.5,464.2 L441.8,465.3 L443.1,466.8 L444.4,469.1 L445.7,467.3 L447.0,468.5 L448.3,466.7 L449.6,465.7 L450.9,465.8 L452.2,464.5 L453.5,465.2 L454.8,464.3 L456.1,468.0 L457.4,470.8 L458.7,472.4 L460.0,471.1 L461.3,471.2 L462.6,472.4 L463.9,471.9 L465.2,471.2 L466.5,472.9 L467.8,471.7 L469.1,473.4 L470.4,472.5 L471.7,473.4 L473.0,475.6 L474.3,473.7 L475.6,473.7 L476.9,472.1 L478.2,472.4 L479.5,469.5 L480.8,470.8 L482.1,468.2 L483.4,467.5 L484.7,469.1 L486.0,469.8 L487.3,466.0 L488.6,469.8 L489.9,466.0 L491.2,467.1 L492.5,466.0 L493.8,465.6 L495.1,463.6 L496.4,464.4 L497.7,463.3 L499.0,463.5 L500.3,463.3 L501.6,468.0 L502.9,468.6 L504.2,470.3 L505.5,465.2 L506.8,467.3 L508.1,462.8 L509.4,465.4 L510.7,462.8 L512.0,460.7 L513.3,460.8 L514.6,463.3 L515.9,463.9 L517.2,463.5 L518.5,465.4 L519.8,463.7 L521.1,467.4 L522.4,467.8 L523.7,468.9 L525.0,469.0 L526.3,464.5 L527.6,463.0 L528.9,457.6 L530.2,449.3 L531.5,453.1 L532.8,454.8 L534.1,456.9 L535.4,459.8 L536.7,460.6 L538.0,457.2 L539.3,459.3 L540.6,459.4 L541.9,456.2 L543.2,458.0 L544.5,456.1 L545.8,457.5 L547.1,460.0 L548.4,459.7 L549.7,459.9 L551.0,462.1 L552.3,458.6 L553.6,459.0 L554.9,458.5 L556.2,456.0 L557.5,454.1 L558.8,456.8 L560.1,457.0 L561.4,459.3 L562.7,459.5 L564.0,459.4 L565.3,458.4 L566.6,457.5 L567.9,456.1 L569.2,456.7 L570.5,454.9 L571.8,453.8 L573.1,451.6 L574.4,450.3 L575.7,450.8 L577.0,448.8 L578.3,449.8 L579.6,447.1 L580.9,449.8 L582.2,451.3 L583.5,449.4 L584.8,450.9 L586.1,452.6 L587.4,453.4 L588.7,451.8 L590.0,449.7 L591.3,449.5 L592.6,448.8 L593.9,447.3 L595.2,448.3 L596.5,450.0 L597.8,448.7 L599.1,441.2 L600.4,440.5 L601.7,439.6 L603.0,439.2 L604.3,440.7 L605.6,440.3 L606.9,438.8 L608.2,441.3 L609.5,443.6 L610.8,443.7 L612.1,444.1 L613.4,446.7 L614.7,444.0 L616.0,446.3 L617.3,446.1 L618.6,446.7 L619.9,447.8 L621.2,448.8 L622.5,449.9 L623.8,447.0 L625.1,444.9 L626.4,441.8 L627.7,442.0 L629.0,441.7 L630.3,444.5 L631.6,446.1 L632.9,445.7 L634.2,444.1 L635.5,442.1 L636.8,441.5 L638.1,439.6 L639.4,435.8 L640.7,432.0 L642.0,431.3 L643.3,429.4 L644.6,432.7 L645.9,430.1 L647.2,431.9 L648.5,428.0 L649.8,427.4 L651.1,425.3 L652.4,421.8 L653.7,417.7 L655.0,415.0 L656.3,421.7 L657.6,425.1 L658.9,427.4 L660.2,430.7 L661.5,429.7 L662.8,428.7 L664.1,430.8 L665.4,430.6 L666.7,430.6 L668.0,430.1 L669.3,426.8 L670.6,427.4 L671.9,425.7 L673.2,425.0 L674.5,422.7 L675.8,422.4 L677.1,423.2 L678.4,420.3 L679.7,424.4 L681.0,421.4 L682.3,421.8 L683.6,422.4 L684.9,423.8 L686.2,427.8 L687.5,432.7 L688.8,429.7 L690.1,429.7 L691.4,425.4 L692.7,424.1 L694.0,422.2 L695.3,423.3 L696.6,420.8 L697.9,421.8 L699.2,421.5 L700.5,421.3 L701.8,420.8 L703.1,419.7 L704.4,419.0 L705.7,418.3 L707.0,417.9 L708.3,417.6 L709.6,417.9 L710.9,416.8 L712.2,420.3 L713.5,423.2 L714.8,424.6 L716.1,428.1 L717.4,428.3 L718.7,431.2 L720.0,428.9 L721.3,429.2 L722.6,428.9 L723.9,426.0 L725.2,428.4 L726.5,426.5 L727.8,429.4 L729.1,425.7 L730.4,426.6 L731.7,426.5 L733.0,422.4 L734.3,423.8 L735.6,418.3 L736.9,419.2 L738.2,416.8 L739.5,418.7 L740.8,414.1 L742.1,418.1 L743.4,414.0 L744.7,415.8 L746.0,413.0 L747.3,414.8 L748.6,414.4 L749.9,416.1 L751.2,416.4 L752.5,417.9 L753.8,418.9 L755.1,417.9 L756.4,416.5 L757.7,415.2 L759.0,415.7 L760.3,412.6 L761.6,411.4 L762.9,404.7 L764.2,404.4 L765.5,406.9 L766.8,407.7 L768.1,406.0 L769.4,405.2 L770.7,404.1 L772.0,404.8 L773.3,401.6 L774.6,403.1 L775.9,405.3 L777.2,406.0 L778.5,408.1 L779.8,406.7 L781.1,406.0 L782.4,405.6 L783.7,404.8 L785.0,406.1 L786.3,405.6 L787.6,407.7 L788.9,408.0 L790.2,409.1 L791.5,411.3 L792.8,413.1 L794.1,413.8 L795.4,413.7 L796.7,412.0 L798.0,413.2 L799.3,411.5 L800.6,411.3 L801.9,410.1 L803.2,411.8 L804.5,414.0 L805.8,412.4 L807.1,414.3 L808.4,414.5 L809.7,413.7 L811.0,415.0 L812.3,413.9 L813.6,414.6 L814.9,415.4 L816.2,415.3 L817.5,415.1 L818.8,414.3 L820.1,415.3 L821.4,413.3 L822.7,415.6 L824.0,413.2 L825.3,413.8 L826.6,413.2 L827.9,412.1 L829.2,409.8 L830.5,410.8 L831.8,409.8 L833.1,408.4 L834.4,408.1 L835.7,411.0 L837.0,410.2 L838.3,411.6 L839.6,411.2 L840.9,412.1 L842.2,414.2 L843.5,417.4 L844.8,417.5 L846.1,417.8 L847.4,416.2 L848.7,417.8 L850.0,415.3 L851.3,417.3 L852.6,414.1 L853.9,418.2 L855.2,416.5 L856.5,417.3 L857.8,418.8 L859.1,416.6 L860.4,416.0 L861.7,414.8 L863.0,416.6 L864.3,413.6 L865.6,413.8 L866.9,414.3 L868.2,420.1 L869.5,420.7 L870.8,416.6 L872.1,412.5 L873.4,406.9 L874.7,407.2 L876.0,404.5 L877.3,408.0 L878.6,405.6 L879.9,406.8 L881.2,406.9 L882.5,405.9 L883.8,404.1 L885.1,405.0 L886.4,404.3 L887.7,403.3 L889.0,403.9 L890.3,406.6 L891.6,406.6 L892.9,407.0 L894.2,405.4 L895.5,403.6 L896.8,404.9 L898.1,405.5 L899.4,409.9 L900.7,410.1 L902.0,411.9 L903.3,413.5 L904.6,416.3 L905.9,413.9 L907.2,416.6 L908.5,419.5 L909.8,416.6 L911.1,418.0 L912.4,412.9 L913.7,413.4 L915.0,412.7 L916.3,415.3 L917.6,417.5 L918.9,419.3 L920.2,418.9 L921.5,419.1 L922.8,419.5 L924.1,420.9 L925.4,420.0 L926.7,420.1 L928.0,423.4 L929.3,426.9 L930.6,430.4 L931.9,431.5 L933.2,432.1 L934.5,432.2 L935.8,434.4 L937.1,431.2 L938.4,433.6 L939.7,429.8 L941.0,432.6 L942.3,427.1 L943.6,427.6 L944.9,425.5 L946.2,424.8 L947.5,423.6 L948.8,422.7 L950.1,421.4 L951.4,419.7 L952.7,421.7 L954.0,417.1 L955.3,419.7 L956.6,421.5 L957.9,421.6 L959.2,422.7 L960.5,421.1 L961.8,421.4 L963.1,416.6 L964.4,417.0 L965.7,416.5 L967.0,414.0 L968.3,415.8 L969.6,416.3" stroke="#ff1414" stroke-width="1.7" fill="none" stroke-linejoin="round"/></svg>
<div class="n" style="left:8px;top:186.5px"><span style="letter-spacing:1.27px">01</span></div>
<div class="n" style="left:30px;top:186.5px"><span style="letter-spacing:1.27px">02</span></div>
<div class="n" style="left:51px;top:186.5px"><span style="letter-spacing:1.27px">03</span></div>
<div class="n" style="left:79px;top:186.5px"><span style="letter-spacing:1.27px">04</span></div>
<div class="n" style="left:110px;top:186.5px"><span style="letter-spacing:1.27px">088</span></div>
<div class="n" style="left:140px;top:186.5px"><span style="letter-spacing:1.27px">09</span></div>
<div class="n" style="left:187px;top:186.5px"><span style="letter-spacing:1.27px">10</span></div>
<div class="n" style="left:235px;top:186.5px"><span style="letter-spacing:1.27px">11</span></div>
<div class="n" style="left:282px;top:186.5px"><span style="letter-spacing:1.27px">12</span></div>
<div class="n" style="left:323px;top:186.5px"><span style="letter-spacing:1.27px">13</span></div>
<div class="n" style="left:359px;top:186.5px"><span style="letter-spacing:1.27px">14</span></div>
<div class="n" style="left:390px;top:186.5px"><span style="letter-spacing:1.27px">15</span></div>
<div class="n" style="left:411px;top:186.5px"><span style="letter-spacing:1.27px">16</span></div>
<div class="n" style="left:436px;top:186.5px"><span style="letter-spacing:1.27px">17</span></div>
<div class="n" style="left:478px;top:186.5px"><span style="letter-spacing:1.27px">18</span></div>
<div class="n" style="left:519px;top:186.5px"><span style="letter-spacing:1.27px">19</span></div>
<div class="n" style="left:563px;top:186.5px"><span style="letter-spacing:1.27px">20</span></div>
<div class="n" style="left:608px;top:186.5px"><span style="letter-spacing:1.27px">21</span></div>
<div class="n" style="left:656px;top:186.5px"><span style="letter-spacing:1.27px">22</span></div>
<div class="n" style="left:704px;top:186.5px"><span style="letter-spacing:1.27px">23</span></div>
<div class="n" style="left:751px;top:186.5px"><span style="letter-spacing:1.27px">00</span></div>
<div class="n" style="left:796px;top:186.5px"><span style="letter-spacing:1.27px">01</span></div>
<div class="n" style="left:832px;top:186.5px"><span style="letter-spacing:1.27px">02</span></div>
<div class="n" style="left:870px;top:186.5px"><span style="letter-spacing:1.27px">03</span></div>
<div class="n" style="left:915px;top:186.5px"><span style="letter-spacing:1.27px">04</span></div>
<div class="n" style="left:955px;top:186.5px"><span style="letter-spacing:1.27px">05</span></div>
<div class="a" style="left:971px;top:37px;width:47px;height:164px;overflow:hidden">
<div class="n" style="left:1px;top:31.900000000000006px"><span style="letter-spacing:1.27px">6</span><span style="margin-left:1.30px;letter-spacing:3.03px">,</span><span style="letter-spacing:1.27px">210</span></div>
<div class="n" style="left:1px;top:61.5px"><span style="letter-spacing:1.27px">6</span><span style="margin-left:1.30px;letter-spacing:3.03px">,</span><span style="letter-spacing:1.27px">200</span></div>
<div class="n" style="left:1px;top:91.1px"><span style="letter-spacing:1.27px">6</span><span style="margin-left:1.30px;letter-spacing:3.03px">,</span><span style="letter-spacing:1.27px">190</span></div>
<div class="n" style="left:1px;top:120.9px"><span style="letter-spacing:1.27px">6</span><span style="margin-left:1.30px;letter-spacing:3.03px">,</span><span style="letter-spacing:1.27px">180</span></div>
<div class="n" style="left:1px;top:150.6px"><span style="letter-spacing:1.27px">6</span><span style="margin-left:1.30px;letter-spacing:3.03px">,</span><span style="letter-spacing:1.27px">170</span></div>
</div>
<div class="a" style="left:971px;top:36px;width:47px;height:16px;background:#d6d6d6"></div>
<div class="t" style="left:981.5px;top:37.5px;color:#111;font-weight:bold;font-size:12px;transform:scaleX(.69)">6,222</div>
<div class="n" style="left:8px;top:377.5px"><span style="letter-spacing:1.27px">01</span></div>
<div class="n" style="left:30px;top:377.5px"><span style="letter-spacing:1.27px">02</span></div>
<div class="n" style="left:51px;top:377.5px"><span style="letter-spacing:1.27px">03</span></div>
<div class="n" style="left:79px;top:377.5px"><span style="letter-spacing:1.27px">04</span></div>
<div class="n" style="left:110px;top:377.5px"><span style="letter-spacing:1.27px">088</span></div>
<div class="n" style="left:140px;top:377.5px"><span style="letter-spacing:1.27px">09</span></div>
<div class="n" style="left:187px;top:377.5px"><span style="letter-spacing:1.27px">10</span></div>
<div class="n" style="left:235px;top:377.5px"><span style="letter-spacing:1.27px">11</span></div>
<div class="n" style="left:282px;top:377.5px"><span style="letter-spacing:1.27px">12</span></div>
<div class="n" style="left:323px;top:377.5px"><span style="letter-spacing:1.27px">13</span></div>
<div class="n" style="left:359px;top:377.5px"><span style="letter-spacing:1.27px">14</span></div>
<div class="n" style="left:390px;top:377.5px"><span style="letter-spacing:1.27px">15</span></div>
<div class="n" style="left:411px;top:377.5px"><span style="letter-spacing:1.27px">16</span></div>
<div class="n" style="left:436px;top:377.5px"><span style="letter-spacing:1.27px">17</span></div>
<div class="n" style="left:478px;top:377.5px"><span style="letter-spacing:1.27px">18</span></div>
<div class="n" style="left:519px;top:377.5px"><span style="letter-spacing:1.27px">19</span></div>
<div class="n" style="left:563px;top:377.5px"><span style="letter-spacing:1.27px">20</span></div>
<div class="n" style="left:608px;top:377.5px"><span style="letter-spacing:1.27px">21</span></div>
<div class="n" style="left:656px;top:377.5px"><span style="letter-spacing:1.27px">22</span></div>
<div class="n" style="left:704px;top:377.5px"><span style="letter-spacing:1.27px">23</span></div>
<div class="n" style="left:751px;top:377.5px"><span style="letter-spacing:1.27px">00</span></div>
<div class="n" style="left:796px;top:377.5px"><span style="letter-spacing:1.27px">01</span></div>
<div class="n" style="left:832px;top:377.5px"><span style="letter-spacing:1.27px">02</span></div>
<div class="n" style="left:870px;top:377.5px"><span style="letter-spacing:1.27px">03</span></div>
<div class="n" style="left:915px;top:377.5px"><span style="letter-spacing:1.27px">04</span></div>
<div class="n" style="left:955px;top:377.5px"><span style="letter-spacing:1.27px">05</span></div>
<div class="a" style="left:971px;top:204px;width:47px;height:188px;overflow:hidden">
<div class="n" style="left:1px;top:19.80000000000001px"><span style="letter-spacing:1.27px">4</span><span style="margin-left:1.30px;letter-spacing:3.03px">,</span><span style="letter-spacing:1.27px">325</span></div>
<div class="n" style="left:1px;top:54.5px"><span style="letter-spacing:1.27px">4</span><span style="margin-left:1.30px;letter-spacing:3.03px">,</span><span style="letter-spacing:1.27px">300</span></div>
<div class="n" style="left:1px;top:89.10000000000002px"><span style="letter-spacing:1.27px">4</span><span style="margin-left:1.30px;letter-spacing:3.03px">,</span><span style="letter-spacing:1.27px">275</span></div>
<div class="n" style="left:1px;top:158.5px"><span style="letter-spacing:1.27px">4</span><span style="margin-left:1.30px;letter-spacing:3.03px">,</span><span style="letter-spacing:1.27px">225</span></div>
</div>
<div class="a" style="left:971px;top:320px;width:47px;height:16px;background:#d6d6d6"></div>
<div class="t" style="left:981.5px;top:321.5px;color:#111;font-weight:bold;font-size:12px;transform:scaleX(.69)">4,258</div>
<div class="n" style="left:8px;top:525.5px"><span style="letter-spacing:1.27px">01</span></div>
<div class="n" style="left:30px;top:525.5px"><span style="letter-spacing:1.27px">02</span></div>
<div class="n" style="left:51px;top:525.5px"><span style="letter-spacing:1.27px">03</span></div>
<div class="n" style="left:79px;top:525.5px"><span style="letter-spacing:1.27px">04</span></div>
<div class="n" style="left:110px;top:525.5px"><span style="letter-spacing:1.27px">088</span></div>
<div class="n" style="left:140px;top:525.5px"><span style="letter-spacing:1.27px">09</span></div>
<div class="n" style="left:187px;top:525.5px"><span style="letter-spacing:1.27px">10</span></div>
<div class="n" style="left:235px;top:525.5px"><span style="letter-spacing:1.27px">11</span></div>
<div class="n" style="left:282px;top:525.5px"><span style="letter-spacing:1.27px">12</span></div>
<div class="n" style="left:323px;top:525.5px"><span style="letter-spacing:1.27px">13</span></div>
<div class="n" style="left:359px;top:525.5px"><span style="letter-spacing:1.27px">14</span></div>
<div class="n" style="left:390px;top:525.5px"><span style="letter-spacing:1.27px">15</span></div>
<div class="n" style="left:411px;top:525.5px"><span style="letter-spacing:1.27px">16</span></div>
<div class="n" style="left:436px;top:525.5px"><span style="letter-spacing:1.27px">17</span></div>
<div class="n" style="left:478px;top:525.5px"><span style="letter-spacing:1.27px">18</span></div>
<div class="n" style="left:519px;top:525.5px"><span style="letter-spacing:1.27px">19</span></div>
<div class="n" style="left:563px;top:525.5px"><span style="letter-spacing:1.27px">20</span></div>
<div class="n" style="left:608px;top:525.5px"><span style="letter-spacing:1.27px">21</span></div>
<div class="n" style="left:656px;top:525.5px"><span style="letter-spacing:1.27px">22</span></div>
<div class="n" style="left:704px;top:525.5px"><span style="letter-spacing:1.27px">23</span></div>
<div class="n" style="left:751px;top:525.5px"><span style="letter-spacing:1.27px">00</span></div>
<div class="n" style="left:796px;top:525.5px"><span style="letter-spacing:1.27px">01</span></div>
<div class="n" style="left:832px;top:525.5px"><span style="letter-spacing:1.27px">02</span></div>
<div class="n" style="left:870px;top:525.5px"><span style="letter-spacing:1.27px">03</span></div>
<div class="n" style="left:915px;top:525.5px"><span style="letter-spacing:1.27px">04</span></div>
<div class="n" style="left:955px;top:525.5px"><span style="letter-spacing:1.27px">05</span></div>
<div class="a" style="left:971px;top:397px;width:47px;height:142px;overflow:hidden">
<div class="n" style="left:1px;top:-4.100000000000023px"><span style="letter-spacing:1.27px">1</span><span style="margin-left:1.30px;letter-spacing:3.03px">,</span><span style="letter-spacing:1.27px">975</span></div>
<div class="n" style="left:1px;top:22.80000000000001px"><span style="letter-spacing:1.27px">1</span><span style="margin-left:1.30px;letter-spacing:3.03px">,</span><span style="letter-spacing:1.27px">950</span></div>
<div class="n" style="left:1px;top:49.60000000000002px"><span style="letter-spacing:1.27px">1</span><span style="margin-left:1.30px;letter-spacing:3.03px">,</span><span style="letter-spacing:1.27px">925</span></div>
<div class="n" style="left:1px;top:76.39999999999998px"><span style="letter-spacing:1.27px">1</span><span style="margin-left:1.30px;letter-spacing:3.03px">,</span><span style="letter-spacing:1.27px">900</span></div>
<div class="n" style="left:1px;top:103.30000000000001px"><span style="letter-spacing:1.27px">1</span><span style="margin-left:1.30px;letter-spacing:3.03px">,</span><span style="letter-spacing:1.27px">875</span></div>
<div class="n" style="left:1px;top:130.20000000000005px"><span style="letter-spacing:1.27px">1</span><span style="margin-left:1.30px;letter-spacing:3.03px">,</span><span style="letter-spacing:1.27px">850</span></div>
</div>
<div class="a" style="left:971px;top:407px;width:47px;height:17px;background:#d6d6d6"></div>
<div class="t" style="left:981.5px;top:409.0px;color:#111;font-weight:bold;font-size:12px;transform:scaleX(.69)">1,964</div>
<div class="n" style="left:751px;top:174.6px"><span style="letter-spacing:1.27px">29</span></div>
<div class="n" style="left:751px;top:366.3px"><span style="letter-spacing:1.27px">29</span></div>
<div class="n" style="left:751px;top:513.3px"><span style="letter-spacing:1.27px">29</span></div>
<div class="n" style="left:6.5px;top:37.5px;color:#dcdcdc"><svg class="k" style="width:14.769230769230768px;height:9.4px;vertical-align:top;margin-top:0.8px"><use href="#ji"/></svg><svg class="k" style="width:14.769230769230768px;height:9.4px;vertical-align:top;margin-top:0.8px"><use href="#koku"/></svg><svg class="k" style="width:7.385px;height:9.4px;vertical-align:top;margin-top:0.8px"><use href="#colon"/></svg><span style="letter-spacing:1.27px">22</span><svg class="k" style="width:7.385px;height:9.4px;vertical-align:top;margin-top:0.8px"><use href="#colon"/></svg><span style="letter-spacing:1.27px">39</span><span style="letter-spacing:4.33px"> </span><svg class="k" style="width:14.769230769230768px;height:9.4px;vertical-align:top;margin-top:0.8px"><use href="#shi"/></svg><svg class="k" style="width:14.769230769230768px;height:9.4px;vertical-align:top;margin-top:0.8px"><use href="#chi"/></svg><svg class="k" style="width:7.385px;height:9.4px;vertical-align:top;margin-top:0.8px"><use href="#colon"/></svg><span style="letter-spacing:1.27px">6</span><span style="margin-left:1.30px;letter-spacing:3.03px">,</span><span style="letter-spacing:1.27px">193</span><span style="letter-spacing:4.33px"> </span><svg class="k" style="width:14.769230769230768px;height:9.4px;vertical-align:top;margin-top:0.8px"><use href="#kou"/></svg><svg class="k" style="width:14.769230769230768px;height:9.4px;vertical-align:top;margin-top:0.8px"><use href="#chi"/></svg><svg class="k" style="width:7.385px;height:9.4px;vertical-align:top;margin-top:0.8px"><use href="#colon"/></svg><span style="letter-spacing:1.27px">6</span><span style="margin-left:1.30px;letter-spacing:3.03px">,</span><span style="letter-spacing:1.27px">193</span><span style="letter-spacing:4.33px"> </span><svg class="k" style="width:14.769230769230768px;height:9.4px;vertical-align:top;margin-top:0.8px"><use href="#an"/></svg><svg class="k" style="width:14.769230769230768px;height:9.4px;vertical-align:top;margin-top:0.8px"><use href="#chi"/></svg><svg class="k" style="width:7.385px;height:9.4px;vertical-align:top;margin-top:0.8px"><use href="#colon"/></svg><span style="letter-spacing:1.27px">6</span><span style="margin-left:1.30px;letter-spacing:3.03px">,</span><span style="letter-spacing:1.27px">188</span><span style="letter-spacing:4.33px"> </span><svg class="k" style="width:14.769230769230768px;height:9.4px;vertical-align:top;margin-top:0.8px"><use href="#shu"/></svg><svg class="k" style="width:14.769230769230768px;height:9.4px;vertical-align:top;margin-top:0.8px"><use href="#chi"/></svg><svg class="k" style="width:7.385px;height:9.4px;vertical-align:top;margin-top:0.8px"><use href="#colon"/></svg><span style="letter-spacing:1.27px">6</span><span style="margin-left:1.30px;letter-spacing:3.03px">,</span><span style="letter-spacing:1.27px">188</span></div>
<div class="n" style="left:6.5px;top:204.7px;color:#dcdcdc"><svg class="k" style="width:14.769230769230768px;height:9.4px;vertical-align:top;margin-top:0.8px"><use href="#ji"/></svg><svg class="k" style="width:14.769230769230768px;height:9.4px;vertical-align:top;margin-top:0.8px"><use href="#koku"/></svg><svg class="k" style="width:7.385px;height:9.4px;vertical-align:top;margin-top:0.8px"><use href="#colon"/></svg><span style="letter-spacing:1.27px">22</span><svg class="k" style="width:7.385px;height:9.4px;vertical-align:top;margin-top:0.8px"><use href="#colon"/></svg><span style="letter-spacing:1.27px">39</span><span style="letter-spacing:4.33px"> </span><svg class="k" style="width:14.769230769230768px;height:9.4px;vertical-align:top;margin-top:0.8px"><use href="#shi"/></svg><svg class="k" style="width:14.769230769230768px;height:9.4px;vertical-align:top;margin-top:0.8px"><use href="#chi"/></svg><svg class="k" style="width:7.385px;height:9.4px;vertical-align:top;margin-top:0.8px"><use href="#colon"/></svg><svg class="k" style="width:7.385px;height:9.4px;vertical-align:top;margin-top:0.8px"><use href="#dash"/></svg><svg class="k" style="width:7.385px;height:9.4px;vertical-align:top;margin-top:0.8px"><use href="#dash"/></svg><svg class="k" style="width:7.385px;height:9.4px;vertical-align:top;margin-top:0.8px"><use href="#dash"/></svg><span style="letter-spacing:4.33px"> </span><svg class="k" style="width:14.769230769230768px;height:9.4px;vertical-align:top;margin-top:0.8px"><use href="#kou"/></svg><svg class="k" style="width:14.769230769230768px;height:9.4px;vertical-align:top;margin-top:0.8px"><use href="#chi"/></svg><svg class="k" style="width:7.385px;height:9.4px;vertical-align:top;margin-top:0.8px"><use href="#colon"/></svg><svg class="k" style="width:7.385px;height:9.4px;vertical-align:top;margin-top:0.8px"><use href="#dash"/></svg><svg class="k" style="width:7.385px;height:9.4px;vertical-align:top;margin-top:0.8px"><use href="#dash"/></svg><svg class="k" style="width:7.385px;height:9.4px;vertical-align:top;margin-top:0.8px"><use href="#dash"/></svg><span style="letter-spacing:4.33px"> </span><svg class="k" style="width:14.769230769230768px;height:9.4px;vertical-align:top;margin-top:0.8px"><use href="#an"/></svg><svg class="k" style="width:14.769230769230768px;height:9.4px;vertical-align:top;margin-top:0.8px"><use href="#chi"/></svg><svg class="k" style="width:7.385px;height:9.4px;vertical-align:top;margin-top:0.8px"><use href="#colon"/></svg><svg class="k" style="width:7.385px;height:9.4px;vertical-align:top;margin-top:0.8px"><use href="#dash"/></svg><svg class="k" style="width:7.385px;height:9.4px;vertical-align:top;margin-top:0.8px"><use href="#dash"/></svg><svg class="k" style="width:7.385px;height:9.4px;vertical-align:top;margin-top:0.8px"><use href="#dash"/></svg><span style="letter-spacing:4.33px"> </span><svg class="k" style="width:14.769230769230768px;height:9.4px;vertical-align:top;margin-top:0.8px"><use href="#shu"/></svg><svg class="k" style="width:14.769230769230768px;height:9.4px;vertical-align:top;margin-top:0.8px"><use href="#chi"/></svg><svg class="k" style="width:7.385px;height:9.4px;vertical-align:top;margin-top:0.8px"><use href="#colon"/></svg><svg class="k" style="width:7.385px;height:9.4px;vertical-align:top;margin-top:0.8px"><use href="#dash"/></svg><svg class="k" style="width:7.385px;height:9.4px;vertical-align:top;margin-top:0.8px"><use href="#dash"/></svg><svg class="k" style="width:7.385px;height:9.4px;vertical-align:top;margin-top:0.8px"><use href="#dash"/></svg></div>
<div class="n" style="left:6.5px;top:395.7px;color:#bcbcbc"><span style="letter-spacing:4.33px">[</span><svg class="k" style="width:14.769230769230768px;height:9.4px;vertical-align:top;margin-top:0.8px"><use href="#kin"/></svg><span style="letter-spacing:4.33px"> </span><span style="letter-spacing:1.27px">22</span><span style="letter-spacing:4.33px">/</span><span style="letter-spacing:1.27px">04</span><span style="letter-spacing:4.33px"> </span><span style="letter-spacing:1.27px">6</span><span style="margin-left:1.30px;letter-spacing:3.03px">,</span><span style="letter-spacing:1.27px">188</span><svg class="k" style="width:14.769230769230768px;height:9.4px;vertical-align:top;margin-top:0.8px"><use href="#times"/></svg><span style="letter-spacing:1.27px">1</span><span style="margin-left:2.16px;letter-spacing:2.16px">.</span><span style="letter-spacing:1.27px">00</span><span style="letter-spacing:4.33px">]</span><svg class="k" style="width:14.769230769230768px;height:9.4px;vertical-align:top;margin-top:0.8px"><use href="#minus"/></svg><span style="letter-spacing:4.33px">[</span><svg class="k" style="width:14.769230769230768px;height:9.4px;vertical-align:top;margin-top:0.8px"><use href="#haku"/></svg><svg class="k" style="width:14.769230769230768px;height:9.4px;vertical-align:top;margin-top:0.8px"><use href="#kin"/></svg><span style="letter-spacing:4.33px"> </span><span style="letter-spacing:1.27px">22</span><span style="letter-spacing:4.33px">/</span><span style="letter-spacing:1.27px">04</span><span style="letter-spacing:4.33px"> </span><span style="letter-spacing:1.27px">4</span><span style="margin-left:1.30px;letter-spacing:3.03px">,</span><span style="letter-spacing:1.27px">242</span><svg class="k" style="width:14.769230769230768px;height:9.4px;vertical-align:top;margin-top:0.8px"><use href="#times"/></svg><span style="letter-spacing:1.27px">1</span><span style="margin-left:2.16px;letter-spacing:2.16px">.</span><span style="letter-spacing:1.27px">00</span><span style="letter-spacing:4.33px">]</span><span style="letter-spacing:4.33px"> </span><svg class="k" style="width:14.769230769230768px;height:9.4px;vertical-align:top;margin-top:0.8px"><use href="#shu"/></svg><svg class="k" style="width:14.769230769230768px;height:9.4px;vertical-align:top;margin-top:0.8px"><use href="#chi"/></svg><span style="letter-spacing:4.33px"> </span><svg class="k" style="width:14.769230769230768px;height:9.4px;vertical-align:top;margin-top:0.8px"><use href="#ji"/></svg><svg class="k" style="width:14.769230769230768px;height:9.4px;vertical-align:top;margin-top:0.8px"><use href="#koku"/></svg><svg class="k" style="width:7.385px;height:9.4px;vertical-align:top;margin-top:0.8px"><use href="#colon"/></svg><span style="letter-spacing:1.27px">22</span><svg class="k" style="width:7.385px;height:9.4px;vertical-align:top;margin-top:0.8px"><use href="#colon"/></svg><span style="letter-spacing:1.27px">38</span><span style="letter-spacing:4.33px"> </span><span style="letter-spacing:1.27px">1</span><span style="margin-left:1.30px;letter-spacing:3.03px">,</span><span style="letter-spacing:1.27px">946</span></div>
</body></html>
